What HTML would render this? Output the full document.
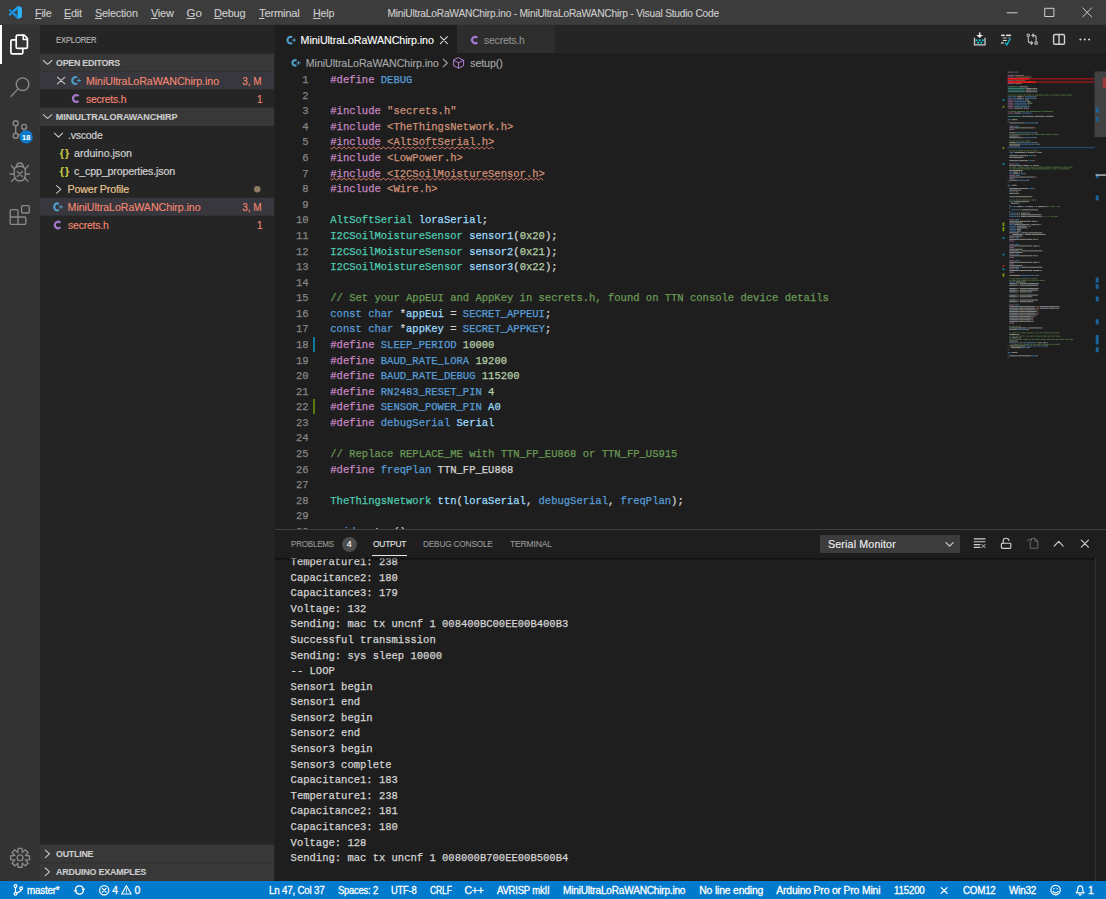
<!DOCTYPE html>
<html>
<head>
<meta charset="utf-8">
<title>MiniUltraLoRaWANChirp.ino - MiniUltraLoRaWANChirp - Visual Studio Code</title>
<style>
*{box-sizing:border-box;margin:0;padding:0}
html,body{width:1106px;height:899px;overflow:hidden;background:#1e1e1e}
body{font-family:"Liberation Sans",sans-serif;font-size:10.66px;color:#ccc;position:relative}
.abs{position:absolute}
#titlebar{left:0;top:0;width:1106px;height:25px;background:#3c3c3c;border-bottom:1px solid #373737}
#activity{left:0;top:25px;width:40px;height:856px;background:#333}
#sidebar{left:40px;top:25px;width:234px;height:856px;background:#252526}
#editor{left:275px;top:25px;width:831px;height:505px;background:#1e1e1e;overflow:hidden}
#tabs{left:275px;top:25px;width:831px;height:28px;background:#252526}
#panel{left:275px;top:529px;width:831px;height:352px;background:#1e1e1e;border-top:1px solid #414141}
#outarea{left:0;top:28px;width:831px;height:323px;overflow:hidden}
#status{left:0;top:881px;width:1106px;height:18px;background:#007acc}
.bg{position:absolute;left:0;width:234px}
.t{position:absolute;white-space:pre;transform-origin:0 50%;-webkit-text-stroke:0.12px}
.t u{text-decoration-thickness:1px;text-underline-offset:1px}
.code{position:absolute;left:0;width:760px;height:15.58px;line-height:15.58px;font-family:"Liberation Mono",monospace;font-size:10.53px;white-space:pre;color:#d4d4d4;-webkit-text-stroke:0.25px}
.ln{position:absolute;top:1.8px;left:0;width:33.6px;text-align:right;color:#858585}
.cx{position:absolute;left:55.3px;top:1.8px}
.k{color:#c586c0}.b{color:#569cd6}.s{color:#ce9178}.ty{color:#4ec9b0}.v{color:#9cdcfe}.n{color:#b5cea8}.c{color:#6a9955}
.sq{text-decoration:underline wavy #f14c4c;text-decoration-thickness:0.8px;text-underline-offset:1.5px;text-decoration-skip-ink:none}
.out{position:absolute;left:15.6px;height:15.58px;line-height:15.58px;font-family:"Liberation Mono",monospace;font-size:10.53px;white-space:pre;color:#d4d4d4;-webkit-text-stroke:0.25px}
svg{position:absolute;overflow:visible}
</style>
</head>
<body>
<div id="titlebar" class="abs"></div>
<div id="activity" class="abs"></div>
<div id="sidebar" class="abs">
<svg width="236" height="856" viewBox="40 25 236 856" style="left:0;top:0">
<rect x="274" y="25" width="0.35" height="856" fill="#252526"/>
<rect x="40" y="53.6" width="234.35" height="17.8" fill="#383838"/>
<rect x="40" y="71.4" width="234.35" height="18.2" fill="#37373d"/>
<rect x="40" y="107.7" width="234.35" height="18.3" fill="#383838"/>
<rect x="40" y="197.8" width="234.35" height="17.9" fill="#37373d"/>
<rect x="40" y="844.7" width="234.35" height="36.3" fill="#383838"/>
<rect x="40" y="862.6" width="234.35" height="0.8" fill="#2c2c2d"/>
</svg>
</div>
<div id="editor" class="abs">
<div class="code" style="top:46.34px"><span class="ln">1</span><span class="cx"><span class="k">#define</span> <span class="b">DEBUG</span></span></div>
<div class="code" style="top:61.92px"><span class="ln">2</span><span class="cx"></span></div>
<div class="code" style="top:77.50px"><span class="ln">3</span><span class="cx"><span class="k">#include</span> <span class="s">&quot;secrets.h&quot;</span></span></div>
<div class="code" style="top:93.08px"><span class="ln">4</span><span class="cx"><span class="k">#include</span> <span class="s">&lt;TheThingsNetwork.h&gt;</span></span></div>
<div class="code" style="top:108.66px"><span class="ln">5</span><span class="cx"><span class="k">#include</span> <span class="s">&lt;AltSoftSerial.h&gt;</span></span></div>
<div class="code" style="top:124.24px"><span class="ln">6</span><span class="cx"><span class="k">#include</span> <span class="s">&lt;LowPower.h&gt;</span></span></div>
<div class="code" style="top:139.82px"><span class="ln">7</span><span class="cx"><span class="k">#include</span> <span class="s">&lt;I2CSoilMoistureSensor.h&gt;</span></span></div>
<div class="code" style="top:155.40px"><span class="ln">8</span><span class="cx"><span class="k">#include</span> <span class="s">&lt;Wire.h&gt;</span></span></div>
<div class="code" style="top:170.98px"><span class="ln">9</span><span class="cx"></span></div>
<div class="code" style="top:186.56px"><span class="ln">10</span><span class="cx"><span class="ty">AltSoftSerial</span> <span class="v">loraSerial</span>;</span></div>
<div class="code" style="top:202.14px"><span class="ln">11</span><span class="cx"><span class="ty">I2CSoilMoistureSensor</span> <span class="v">sensor1</span>(<span class="n">0x20</span>);</span></div>
<div class="code" style="top:217.72px"><span class="ln">12</span><span class="cx"><span class="ty">I2CSoilMoistureSensor</span> <span class="v">sensor2</span>(<span class="n">0x21</span>);</span></div>
<div class="code" style="top:233.30px"><span class="ln">13</span><span class="cx"><span class="ty">I2CSoilMoistureSensor</span> <span class="v">sensor3</span>(<span class="n">0x22</span>);</span></div>
<div class="code" style="top:248.88px"><span class="ln">14</span><span class="cx"></span></div>
<div class="code" style="top:264.46px"><span class="ln">15</span><span class="cx"><span class="c">// Set your AppEUI and AppKey in secrets.h, found on TTN console device details</span></span></div>
<div class="code" style="top:280.04px"><span class="ln">16</span><span class="cx"><span class="b">const</span> <span class="b">char</span> *<span class="v">appEui</span> = <span class="b">SECRET_APPEUI</span>;</span></div>
<div class="code" style="top:295.62px"><span class="ln">17</span><span class="cx"><span class="b">const</span> <span class="b">char</span> *<span class="v">appKey</span> = <span class="b">SECRET_APPKEY</span>;</span></div>
<div class="code" style="top:311.20px"><span class="ln">18</span><span class="cx"><span class="k">#define</span> <span class="b">SLEEP_PERIOD</span> <span class="n">10000</span></span></div>
<div class="code" style="top:326.78px"><span class="ln">19</span><span class="cx"><span class="k">#define</span> <span class="b">BAUD_RATE_LORA</span> <span class="n">19200</span></span></div>
<div class="code" style="top:342.36px"><span class="ln">20</span><span class="cx"><span class="k">#define</span> <span class="b">BAUD_RATE_DEBUG</span> <span class="n">115200</span></span></div>
<div class="code" style="top:357.94px"><span class="ln">21</span><span class="cx"><span class="k">#define</span> <span class="b">RN2483_RESET_PIN</span> <span class="n">4</span></span></div>
<div class="code" style="top:373.52px"><span class="ln">22</span><span class="cx"><span class="k">#define</span> <span class="b">SENSOR_POWER_PIN</span> <span class="v">A0</span></span></div>
<div class="code" style="top:389.10px"><span class="ln">23</span><span class="cx"><span class="k">#define</span> <span class="b">debugSerial</span> <span class="v">Serial</span></span></div>
<div class="code" style="top:404.68px"><span class="ln">24</span><span class="cx"></span></div>
<div class="code" style="top:420.26px"><span class="ln">25</span><span class="cx"><span class="c">// Replace REPLACE_ME with TTN_FP_EU868 or TTN_FP_US915</span></span></div>
<div class="code" style="top:435.84px"><span class="ln">26</span><span class="cx"><span class="k">#define</span> <span class="b">freqPlan</span> TTN_FP_EU868</span></div>
<div class="code" style="top:451.42px"><span class="ln">27</span><span class="cx"></span></div>
<div class="code" style="top:467.00px"><span class="ln">28</span><span class="cx"><span class="ty">TheThingsNetwork</span> <span class="v">ttn</span>(<span class="v">loraSerial</span>, <span class="b">debugSerial</span>, <span class="b">freqPlan</span>);</span></div>
<div class="code" style="top:482.58px"><span class="ln">29</span><span class="cx"></span></div>
<div class="code" style="top:498.16px"><span class="ln">30</span><span class="cx"><span class="b">void</span> setup()</span></div>
<svg width="831" height="505" viewBox="0 0 831 505" style="left:0;top:0"><path d="M55.30 122.85 L56.69 123.99 L59.15 122.03 L60.22 122.85 L61.61 123.99 L64.07 122.03 L65.14 122.85 L66.53 123.99 L68.99 122.03 L70.06 122.85 L71.45 123.99 L73.91 122.03 L74.98 122.85 L76.37 123.99 L78.83 122.03 L79.90 122.85 L81.29 123.99 L83.75 122.03 L84.82 122.85 L86.21 123.99 L88.67 122.03 L89.74 122.85 L91.13 123.99 L93.59 122.03 L94.66 122.85 L96.05 123.99 L98.51 122.03 L99.58 122.85 L100.97 123.99 L103.43 122.03 L104.50 122.85 L105.89 123.99 L108.35 122.03 L109.42 122.85 L110.81 123.99 L113.27 122.03 L114.34 122.85 L115.73 123.99 L118.19 122.03 L119.26 122.85 L120.65 123.99 L123.11 122.03 L124.18 122.85 L125.57 123.99 L128.03 122.03 L129.10 122.85 L130.49 123.99 L132.95 122.03 L134.02 122.85 L135.41 123.99 L137.87 122.03 L138.94 122.85 L140.33 123.99 L142.79 122.03 L143.86 122.85 L145.25 123.99 L147.71 122.03 L148.78 122.85 L150.17 123.99 L152.63 122.03 L153.70 122.85 L155.09 123.99 L157.55 122.03 L158.62 122.85 L160.01 123.99 L162.47 122.03 L163.54 122.85 L164.93 123.99 L167.39 122.03 L168.46 122.85 L169.85 123.99 L172.31 122.03 L173.38 122.85 L174.77 123.99 L177.23 122.03 L178.30 122.85 L179.69 123.99 L182.15 122.03 L183.22 122.85 L184.61 123.99 L187.07 122.03 L188.14 122.85 L189.53 123.99 L191.99 122.03 L193.06 122.85 L194.45 123.99 L196.91 122.03 L197.98 122.85 L199.37 123.99 L201.83 122.03 L202.90 122.85 L204.29 123.99 L206.75 122.03 L207.82 122.85 L209.21 123.99 L211.67 122.03 L212.74 122.85 L214.13 123.99 L216.59 122.03 L217.66 122.85 L219.05 123.99" fill="none" stroke="#f48771" stroke-width="0.85" stroke-linejoin="miter"/></svg>
<svg width="831" height="505" viewBox="0 0 831 505" style="left:0;top:0"><path d="M55.30 154.01 L56.69 155.15 L59.15 153.19 L60.22 154.01 L61.61 155.15 L64.07 153.19 L65.14 154.01 L66.53 155.15 L68.99 153.19 L70.06 154.01 L71.45 155.15 L73.91 153.19 L74.98 154.01 L76.37 155.15 L78.83 153.19 L79.90 154.01 L81.29 155.15 L83.75 153.19 L84.82 154.01 L86.21 155.15 L88.67 153.19 L89.74 154.01 L91.13 155.15 L93.59 153.19 L94.66 154.01 L96.05 155.15 L98.51 153.19 L99.58 154.01 L100.97 155.15 L103.43 153.19 L104.50 154.01 L105.89 155.15 L108.35 153.19 L109.42 154.01 L110.81 155.15 L113.27 153.19 L114.34 154.01 L115.73 155.15 L118.19 153.19 L119.26 154.01 L120.65 155.15 L123.11 153.19 L124.18 154.01 L125.57 155.15 L128.03 153.19 L129.10 154.01 L130.49 155.15 L132.95 153.19 L134.02 154.01 L135.41 155.15 L137.87 153.19 L138.94 154.01 L140.33 155.15 L142.79 153.19 L143.86 154.01 L145.25 155.15 L147.71 153.19 L148.78 154.01 L150.17 155.15 L152.63 153.19 L153.70 154.01 L155.09 155.15 L157.55 153.19 L158.62 154.01 L160.01 155.15 L162.47 153.19 L163.54 154.01 L164.93 155.15 L167.39 153.19 L168.46 154.01 L169.85 155.15 L172.31 153.19 L173.38 154.01 L174.77 155.15 L177.23 153.19 L178.30 154.01 L179.69 155.15 L182.15 153.19 L183.22 154.01 L184.61 155.15 L187.07 153.19 L188.14 154.01 L189.53 155.15 L191.99 153.19 L193.06 154.01 L194.45 155.15 L196.91 153.19 L197.98 154.01 L199.37 155.15 L201.83 153.19 L202.90 154.01 L204.29 155.15 L206.75 153.19 L207.82 154.01 L209.21 155.15 L211.67 153.19 L212.74 154.01 L214.13 155.15 L216.59 153.19 L217.66 154.01 L219.05 155.15 L221.51 153.19 L222.58 154.01 L223.97 155.15 L226.43 153.19 L227.50 154.01 L228.89 155.15 L231.35 153.19 L232.42 154.01 L233.81 155.15 L236.27 153.19 L237.34 154.01 L238.73 155.15 L241.19 153.19 L242.26 154.01 L243.65 155.15 L246.11 153.19 L247.18 154.01 L248.57 155.15 L251.03 153.19 L252.10 154.01 L253.49 155.15 L255.95 153.19 L257.02 154.01 L258.41 155.15 L260.87 153.19 L261.94 154.01 L263.33 155.15 L265.79 153.19 L266.86 154.01 L268.25 155.15" fill="none" stroke="#f48771" stroke-width="0.85" stroke-linejoin="miter"/></svg>
<div class="abs" style="left:37.9px;top:311.6px;width:2.5px;height:15.6px;background:#0c7d9d"></div>
<div class="abs" style="left:37.9px;top:373.9px;width:2.5px;height:15.6px;background:#587c0c"></div>
<svg width="831" height="505" viewBox="0 0 831 505" style="left:0;top:0" shape-rendering="auto"><g opacity="0.56"><rect x="732.7" y="46.59" width="5.7" height="1.0" fill="#c586c0"/><rect x="739.3" y="46.59" width="4.1" height="1.0" fill="#569cd6"/><rect x="732.7" y="49.87" width="6.6" height="1.0" fill="#c586c0"/><rect x="740.1" y="49.87" width="9.0" height="1.0" fill="#ce9178"/><rect x="732.7" y="51.51" width="6.6" height="1.0" fill="#c586c0"/><rect x="740.1" y="51.51" width="16.4" height="1.0" fill="#ce9178"/><rect x="732.7" y="54.79" width="6.6" height="1.0" fill="#c586c0"/><rect x="740.1" y="54.79" width="9.8" height="1.0" fill="#ce9178"/><rect x="732.7" y="58.07" width="6.6" height="1.0" fill="#c586c0"/><rect x="740.1" y="58.07" width="6.6" height="1.0" fill="#ce9178"/><rect x="732.7" y="61.35" width="10.7" height="1.0" fill="#4ec9b0"/><rect x="744.2" y="61.35" width="8.2" height="1.0" fill="#cdd9e2"/><rect x="752.4" y="61.35" width="0.8" height="1.0" fill="#d4d4d4"/><rect x="732.7" y="62.99" width="17.2" height="1.0" fill="#4ec9b0"/><rect x="750.7" y="62.99" width="5.7" height="1.0" fill="#d6d6c8"/><rect x="756.5" y="62.99" width="0.8" height="1.0" fill="#d4d4d4"/><rect x="757.3" y="62.99" width="3.3" height="1.0" fill="#b5cea8"/><rect x="760.6" y="62.99" width="1.6" height="1.0" fill="#d4d4d4"/><rect x="732.7" y="64.63" width="17.2" height="1.0" fill="#4ec9b0"/><rect x="750.7" y="64.63" width="5.7" height="1.0" fill="#d6d6c8"/><rect x="756.5" y="64.63" width="0.8" height="1.0" fill="#d4d4d4"/><rect x="757.3" y="64.63" width="3.3" height="1.0" fill="#b5cea8"/><rect x="760.6" y="64.63" width="1.6" height="1.0" fill="#d4d4d4"/><rect x="732.7" y="66.27" width="17.2" height="1.0" fill="#4ec9b0"/><rect x="750.7" y="66.27" width="5.7" height="1.0" fill="#d6d6c8"/><rect x="756.5" y="66.27" width="0.8" height="1.0" fill="#d4d4d4"/><rect x="757.3" y="66.27" width="3.3" height="1.0" fill="#b5cea8"/><rect x="760.6" y="66.27" width="1.6" height="1.0" fill="#d4d4d4"/><rect x="732.7" y="69.55" width="1.6" height="1.0" fill="#6a9955"/><rect x="735.2" y="69.55" width="2.5" height="1.0" fill="#6a9955"/><rect x="738.4" y="69.55" width="3.3" height="1.0" fill="#6a9955"/><rect x="742.5" y="69.55" width="4.9" height="1.0" fill="#6a9955"/><rect x="748.3" y="69.55" width="2.5" height="1.0" fill="#6a9955"/><rect x="751.6" y="69.55" width="4.9" height="1.0" fill="#6a9955"/><rect x="757.3" y="69.55" width="1.6" height="1.0" fill="#6a9955"/><rect x="759.8" y="69.55" width="8.2" height="1.0" fill="#6a9955"/><rect x="768.8" y="69.55" width="4.1" height="1.0" fill="#6a9955"/><rect x="773.7" y="69.55" width="1.6" height="1.0" fill="#6a9955"/><rect x="776.2" y="69.55" width="2.5" height="1.0" fill="#6a9955"/><rect x="779.4" y="69.55" width="5.7" height="1.0" fill="#6a9955"/><rect x="786.0" y="69.55" width="4.9" height="1.0" fill="#6a9955"/><rect x="791.7" y="69.55" width="5.7" height="1.0" fill="#6a9955"/><rect x="732.7" y="71.19" width="4.1" height="1.0" fill="#569cd6"/><rect x="737.6" y="71.19" width="3.3" height="1.0" fill="#569cd6"/><rect x="741.7" y="71.19" width="0.8" height="1.0" fill="#d4d4d4"/><rect x="742.5" y="71.19" width="4.9" height="1.0" fill="#cdd9e2"/><rect x="748.3" y="71.19" width="0.8" height="1.0" fill="#d4d4d4"/><rect x="749.9" y="71.19" width="10.7" height="1.0" fill="#569cd6"/><rect x="760.6" y="71.19" width="0.8" height="1.0" fill="#d4d4d4"/><rect x="732.7" y="72.83" width="4.1" height="1.0" fill="#569cd6"/><rect x="737.6" y="72.83" width="3.3" height="1.0" fill="#569cd6"/><rect x="741.7" y="72.83" width="0.8" height="1.0" fill="#d4d4d4"/><rect x="742.5" y="72.83" width="4.9" height="1.0" fill="#cdd9e2"/><rect x="748.3" y="72.83" width="0.8" height="1.0" fill="#d4d4d4"/><rect x="749.9" y="72.83" width="10.7" height="1.0" fill="#569cd6"/><rect x="760.6" y="72.83" width="0.8" height="1.0" fill="#d4d4d4"/><rect x="732.7" y="74.47" width="5.7" height="1.0" fill="#c586c0"/><rect x="739.3" y="74.47" width="9.8" height="1.0" fill="#569cd6"/><rect x="749.9" y="74.47" width="4.1" height="1.0" fill="#b5cea8"/><rect x="732.7" y="76.11" width="5.7" height="1.0" fill="#c586c0"/><rect x="739.3" y="76.11" width="11.5" height="1.0" fill="#569cd6"/><rect x="751.6" y="76.11" width="4.1" height="1.0" fill="#b5cea8"/><rect x="732.7" y="77.75" width="5.7" height="1.0" fill="#c586c0"/><rect x="739.3" y="77.75" width="12.3" height="1.0" fill="#569cd6"/><rect x="752.4" y="77.75" width="4.9" height="1.0" fill="#b5cea8"/><rect x="732.7" y="79.39" width="5.7" height="1.0" fill="#c586c0"/><rect x="739.3" y="79.39" width="13.1" height="1.0" fill="#569cd6"/><rect x="753.2" y="79.39" width="0.8" height="1.0" fill="#b5cea8"/><rect x="732.7" y="81.03" width="5.7" height="1.0" fill="#c586c0"/><rect x="739.3" y="81.03" width="13.1" height="1.0" fill="#569cd6"/><rect x="753.2" y="81.03" width="1.6" height="1.0" fill="#569cd6"/><rect x="732.7" y="82.67" width="5.7" height="1.0" fill="#c586c0"/><rect x="739.3" y="82.67" width="9.0" height="1.0" fill="#cdd9e2"/><rect x="749.1" y="82.67" width="4.9" height="1.0" fill="#d4d4d4"/><rect x="732.7" y="85.95" width="1.6" height="1.0" fill="#6a9955"/><rect x="735.2" y="85.95" width="5.7" height="1.0" fill="#6a9955"/><rect x="741.7" y="85.95" width="8.2" height="1.0" fill="#6a9955"/><rect x="750.7" y="85.95" width="3.3" height="1.0" fill="#6a9955"/><rect x="754.8" y="85.95" width="9.8" height="1.0" fill="#6a9955"/><rect x="765.5" y="85.95" width="1.6" height="1.0" fill="#6a9955"/><rect x="768.0" y="85.95" width="9.8" height="1.0" fill="#6a9955"/><rect x="732.7" y="87.59" width="5.7" height="1.0" fill="#c586c0"/><rect x="739.3" y="87.59" width="6.6" height="1.0" fill="#cdd9e2"/><rect x="746.6" y="87.59" width="9.8" height="1.0" fill="#569cd6"/><rect x="732.7" y="90.87" width="13.1" height="1.0" fill="#4ec9b0"/><rect x="746.6" y="90.87" width="2.5" height="1.0" fill="#d6d6c8"/><rect x="749.1" y="90.87" width="0.8" height="1.0" fill="#d4d4d4"/><rect x="749.9" y="90.87" width="8.2" height="1.0" fill="#cdd9e2"/><rect x="758.1" y="90.87" width="0.8" height="1.0" fill="#d4d4d4"/><rect x="759.8" y="90.87" width="9.0" height="1.0" fill="#cdd9e2"/><rect x="768.8" y="90.87" width="0.8" height="1.0" fill="#d4d4d4"/><rect x="770.4" y="90.87" width="6.6" height="1.0" fill="#cdd9e2"/><rect x="777.0" y="90.87" width="1.6" height="1.0" fill="#d4d4d4"/><rect x="732.7" y="94.15" width="3.3" height="1.0" fill="#569cd6"/><rect x="736.8" y="94.15" width="4.1" height="1.0" fill="#d6d6c8"/><rect x="740.9" y="94.15" width="1.6" height="1.0" fill="#d4d4d4"/><rect x="732.7" y="95.79" width="0.8" height="1.0" fill="#d4d4d4"/><rect x="734.3" y="97.43" width="9.0" height="1.0" fill="#cdd9e2"/><rect x="743.4" y="97.43" width="0.8" height="1.0" fill="#d4d4d4"/><rect x="744.2" y="97.43" width="4.1" height="1.0" fill="#d6d6c8"/><rect x="748.3" y="97.43" width="0.8" height="1.0" fill="#d4d4d4"/><rect x="749.1" y="97.43" width="12.3" height="1.0" fill="#569cd6"/><rect x="761.4" y="97.43" width="1.6" height="1.0" fill="#d4d4d4"/><rect x="734.3" y="100.71" width="4.9" height="1.0" fill="#c586c0"/><rect x="740.1" y="100.71" width="4.1" height="1.0" fill="#569cd6"/><rect x="734.3" y="102.35" width="9.0" height="1.0" fill="#cdd9e2"/><rect x="743.4" y="102.35" width="0.8" height="1.0" fill="#d4d4d4"/><rect x="744.2" y="102.35" width="5.7" height="1.0" fill="#d6d6c8"/><rect x="749.9" y="102.35" width="1.6" height="1.0" fill="#d4d4d4"/><rect x="751.6" y="102.35" width="6.6" height="1.0" fill="#d4d4d4"/><rect x="758.1" y="102.35" width="2.5" height="1.0" fill="#ce9178"/><rect x="734.3" y="103.99" width="4.9" height="1.0" fill="#c586c0"/><rect x="734.3" y="107.27" width="5.7" height="1.0" fill="#d6d6c8"/><rect x="740.1" y="107.27" width="0.8" height="1.0" fill="#d4d4d4"/><rect x="740.9" y="107.27" width="13.1" height="1.0" fill="#569cd6"/><rect x="754.0" y="107.27" width="0.8" height="1.0" fill="#d4d4d4"/><rect x="755.7" y="107.27" width="4.9" height="1.0" fill="#569cd6"/><rect x="760.6" y="107.27" width="1.6" height="1.0" fill="#d4d4d4"/><rect x="734.3" y="108.91" width="1.6" height="1.0" fill="#6a9955"/><rect x="736.8" y="108.91" width="19.7" height="1.0" fill="#6a9955"/><rect x="757.3" y="108.91" width="1.6" height="1.0" fill="#6a9955"/><rect x="759.8" y="108.91" width="4.9" height="1.0" fill="#6a9955"/><rect x="765.5" y="108.91" width="4.1" height="1.0" fill="#6a9955"/><rect x="770.4" y="108.91" width="4.1" height="1.0" fill="#6a9955"/><rect x="775.3" y="108.91" width="1.6" height="1.0" fill="#6a9955"/><rect x="777.8" y="108.91" width="5.7" height="1.0" fill="#6a9955"/><rect x="734.3" y="110.55" width="7.4" height="1.0" fill="#d6d6c8"/><rect x="741.7" y="110.55" width="2.5" height="1.0" fill="#d4d4d4"/><rect x="734.3" y="112.19" width="8.2" height="1.0" fill="#cdd9e2"/><rect x="742.5" y="112.19" width="0.8" height="1.0" fill="#d4d4d4"/><rect x="743.4" y="112.19" width="4.1" height="1.0" fill="#d6d6c8"/><rect x="747.5" y="112.19" width="0.8" height="1.0" fill="#d4d4d4"/><rect x="748.3" y="112.19" width="11.5" height="1.0" fill="#569cd6"/><rect x="759.8" y="112.19" width="1.6" height="1.0" fill="#d4d4d4"/><rect x="734.3" y="115.47" width="1.6" height="1.0" fill="#6a9955"/><rect x="736.8" y="115.47" width="3.3" height="1.0" fill="#6a9955"/><rect x="740.9" y="115.47" width="1.6" height="1.0" fill="#6a9955"/><rect x="743.4" y="115.47" width="2.5" height="1.0" fill="#6a9955"/><rect x="746.6" y="115.47" width="2.5" height="1.0" fill="#6a9955"/><rect x="749.9" y="115.47" width="5.7" height="1.0" fill="#6a9955"/><rect x="734.3" y="117.11" width="5.7" height="1.0" fill="#d6d6c8"/><rect x="740.1" y="117.11" width="0.8" height="1.0" fill="#d4d4d4"/><rect x="740.9" y="117.11" width="13.1" height="1.0" fill="#569cd6"/><rect x="754.0" y="117.11" width="0.8" height="1.0" fill="#d4d4d4"/><rect x="755.7" y="117.11" width="4.9" height="1.0" fill="#569cd6"/><rect x="760.6" y="117.11" width="1.6" height="1.0" fill="#d4d4d4"/><rect x="734.3" y="118.75" width="9.8" height="1.0" fill="#d6d6c8"/><rect x="744.2" y="118.75" width="0.8" height="1.0" fill="#d4d4d4"/><rect x="745.0" y="118.75" width="13.1" height="1.0" fill="#569cd6"/><rect x="758.1" y="118.75" width="0.8" height="1.0" fill="#d4d4d4"/><rect x="759.8" y="118.75" width="3.3" height="1.0" fill="#569cd6"/><rect x="763.0" y="118.75" width="1.6" height="1.0" fill="#d4d4d4"/><rect x="734.3" y="120.39" width="3.3" height="1.0" fill="#d4d4d4"/><rect x="737.6" y="120.39" width="0.8" height="1.0" fill="#d4d4d4"/><rect x="738.4" y="120.39" width="4.1" height="1.0" fill="#d6d6c8"/><rect x="742.5" y="120.39" width="2.5" height="1.0" fill="#d4d4d4"/><rect x="734.3" y="122.03" width="5.7" height="1.0" fill="#cdd9e2"/><rect x="740.1" y="122.03" width="0.8" height="1.0" fill="#d4d4d4"/><rect x="740.9" y="122.03" width="4.1" height="1.0" fill="#d6d6c8"/><rect x="745.0" y="122.03" width="2.5" height="1.0" fill="#d4d4d4"/><rect x="748.3" y="122.03" width="5.7" height="1.0" fill="#cdd9e2"/><rect x="754.0" y="122.03" width="0.8" height="1.0" fill="#d4d4d4"/><rect x="754.8" y="122.03" width="4.1" height="1.0" fill="#d6d6c8"/><rect x="758.9" y="122.03" width="2.5" height="1.0" fill="#d4d4d4"/><rect x="734.3" y="125.31" width="1.6" height="1.0" fill="#6a9955"/><rect x="736.8" y="125.31" width="3.3" height="1.0" fill="#6a9955"/><rect x="740.9" y="125.31" width="0.8" height="1.0" fill="#6a9955"/><rect x="742.5" y="125.31" width="5.7" height="1.0" fill="#6a9955"/><rect x="749.1" y="125.31" width="1.6" height="1.0" fill="#6a9955"/><rect x="751.6" y="125.31" width="2.5" height="1.0" fill="#6a9955"/><rect x="754.8" y="125.31" width="2.5" height="1.0" fill="#6a9955"/><rect x="758.1" y="125.31" width="4.9" height="1.0" fill="#6a9955"/><rect x="734.3" y="126.95" width="4.1" height="1.0" fill="#569cd6"/><rect x="739.3" y="126.95" width="1.6" height="1.0" fill="#d4d4d4"/><rect x="740.9" y="126.95" width="9.0" height="1.0" fill="#cdd9e2"/><rect x="750.7" y="126.95" width="1.6" height="1.0" fill="#d4d4d4"/><rect x="753.2" y="126.95" width="4.9" height="1.0" fill="#d6d6c8"/><rect x="758.1" y="126.95" width="1.6" height="1.0" fill="#d4d4d4"/><rect x="760.6" y="126.95" width="0.8" height="1.0" fill="#d4d4d4"/><rect x="762.2" y="126.95" width="4.1" height="1.0" fill="#b5cea8"/><rect x="766.3" y="126.95" width="0.8" height="1.0" fill="#d4d4d4"/><rect x="736.0" y="128.59" width="0.8" height="1.0" fill="#d4d4d4"/><rect x="734.3" y="130.23" width="9.0" height="1.0" fill="#cdd9e2"/><rect x="743.4" y="130.23" width="0.8" height="1.0" fill="#d4d4d4"/><rect x="744.2" y="130.23" width="5.7" height="1.0" fill="#d6d6c8"/><rect x="749.9" y="130.23" width="3.3" height="1.0" fill="#d4d4d4"/><rect x="754.0" y="130.23" width="4.9" height="1.0" fill="#569cd6"/><rect x="758.9" y="130.23" width="2.5" height="1.0" fill="#ce9178"/><rect x="734.3" y="131.87" width="2.5" height="1.0" fill="#cdd9e2"/><rect x="736.8" y="131.87" width="0.8" height="1.0" fill="#d4d4d4"/><rect x="737.6" y="131.87" width="8.2" height="1.0" fill="#d6d6c8"/><rect x="745.8" y="131.87" width="2.5" height="1.0" fill="#d4d4d4"/><rect x="734.3" y="135.15" width="9.0" height="1.0" fill="#cdd9e2"/><rect x="743.4" y="135.15" width="0.8" height="1.0" fill="#d4d4d4"/><rect x="744.2" y="135.15" width="5.7" height="1.0" fill="#d6d6c8"/><rect x="749.9" y="135.15" width="3.3" height="1.0" fill="#d4d4d4"/><rect x="754.0" y="135.15" width="3.3" height="1.0" fill="#569cd6"/><rect x="757.3" y="135.15" width="2.5" height="1.0" fill="#ce9178"/><rect x="734.3" y="138.43" width="4.9" height="1.0" fill="#c586c0"/><rect x="740.1" y="138.43" width="4.1" height="1.0" fill="#569cd6"/><rect x="734.3" y="140.07" width="2.5" height="1.0" fill="#cdd9e2"/><rect x="736.8" y="140.07" width="0.8" height="1.0" fill="#d4d4d4"/><rect x="737.6" y="140.07" width="3.3" height="1.0" fill="#d6d6c8"/><rect x="740.9" y="140.07" width="0.8" height="1.0" fill="#d4d4d4"/><rect x="741.7" y="140.07" width="4.9" height="1.0" fill="#cdd9e2"/><rect x="746.6" y="140.07" width="0.8" height="1.0" fill="#d4d4d4"/><rect x="748.3" y="140.07" width="4.9" height="1.0" fill="#cdd9e2"/><rect x="753.2" y="140.07" width="0.8" height="1.0" fill="#d4d4d4"/><rect x="754.8" y="140.07" width="0.8" height="1.0" fill="#d4d4d4"/><rect x="755.7" y="140.07" width="0.8" height="1.0" fill="#b5cea8"/><rect x="756.5" y="140.07" width="0.8" height="1.0" fill="#d4d4d4"/><rect x="758.1" y="140.07" width="4.1" height="1.0" fill="#b5cea8"/><rect x="762.2" y="140.07" width="1.6" height="1.0" fill="#d4d4d4"/><rect x="734.3" y="141.71" width="1.6" height="1.0" fill="#6a9955"/><rect x="736.8" y="141.71" width="4.1" height="1.0" fill="#6a9955"/><rect x="741.7" y="141.71" width="0.8" height="1.0" fill="#6a9955"/><rect x="743.4" y="141.71" width="5.7" height="1.0" fill="#6a9955"/><rect x="749.9" y="141.71" width="4.9" height="1.0" fill="#6a9955"/><rect x="755.7" y="141.71" width="4.1" height="1.0" fill="#6a9955"/><rect x="760.6" y="141.71" width="1.6" height="1.0" fill="#6a9955"/><rect x="763.0" y="141.71" width="6.6" height="1.0" fill="#6a9955"/><rect x="770.4" y="141.71" width="6.6" height="1.0" fill="#6a9955"/><rect x="777.8" y="141.71" width="6.6" height="1.0" fill="#6a9955"/><rect x="785.2" y="141.71" width="2.5" height="1.0" fill="#6a9955"/><rect x="788.5" y="141.71" width="3.3" height="1.0" fill="#6a9955"/><rect x="792.6" y="141.71" width="4.9" height="1.0" fill="#6a9955"/><rect x="734.3" y="143.35" width="1.6" height="1.0" fill="#6a9955"/><rect x="736.8" y="143.35" width="18.9" height="1.0" fill="#6a9955"/><rect x="756.5" y="143.35" width="18.0" height="1.0" fill="#6a9955"/><rect x="775.3" y="143.35" width="1.6" height="1.0" fill="#6a9955"/><rect x="777.8" y="143.35" width="3.3" height="1.0" fill="#6a9955"/><rect x="781.9" y="143.35" width="1.6" height="1.0" fill="#6a9955"/><rect x="784.4" y="143.35" width="2.5" height="1.0" fill="#6a9955"/><rect x="787.6" y="143.35" width="7.4" height="1.0" fill="#6a9955"/><rect x="734.3" y="144.99" width="2.5" height="1.0" fill="#cdd9e2"/><rect x="736.8" y="144.99" width="0.8" height="1.0" fill="#d4d4d4"/><rect x="737.6" y="144.99" width="7.4" height="1.0" fill="#d6d6c8"/><rect x="745.0" y="144.99" width="2.5" height="1.0" fill="#d4d4d4"/><rect x="734.3" y="146.63" width="2.5" height="1.0" fill="#569cd6"/><rect x="737.6" y="146.63" width="5.7" height="1.0" fill="#cdd9e2"/><rect x="744.2" y="146.63" width="0.8" height="1.0" fill="#d4d4d4"/><rect x="745.8" y="146.63" width="0.8" height="1.0" fill="#b5cea8"/><rect x="746.6" y="146.63" width="0.8" height="1.0" fill="#d4d4d4"/><rect x="734.3" y="148.27" width="3.3" height="1.0" fill="#569cd6"/><rect x="738.4" y="148.27" width="4.9" height="1.0" fill="#cdd9e2"/><rect x="744.2" y="148.27" width="0.8" height="1.0" fill="#d4d4d4"/><rect x="745.8" y="148.27" width="4.1" height="1.0" fill="#569cd6"/><rect x="749.9" y="148.27" width="0.8" height="1.0" fill="#d4d4d4"/><rect x="734.3" y="149.91" width="5.7" height="1.0" fill="#c586c0"/><rect x="740.9" y="149.91" width="4.1" height="1.0" fill="#569cd6"/><rect x="734.3" y="151.55" width="9.0" height="1.0" fill="#cdd9e2"/><rect x="743.4" y="151.55" width="0.8" height="1.0" fill="#d4d4d4"/><rect x="744.2" y="151.55" width="5.7" height="1.0" fill="#d6d6c8"/><rect x="749.9" y="151.55" width="0.8" height="1.0" fill="#d4d4d4"/><rect x="750.7" y="151.55" width="0.8" height="1.0" fill="#d4d4d4"/><rect x="751.6" y="151.55" width="1.6" height="1.0" fill="#d4d4d4"/><rect x="753.2" y="151.55" width="4.9" height="1.0" fill="#cdd9e2"/><rect x="758.1" y="151.55" width="3.3" height="1.0" fill="#ce9178"/><rect x="734.3" y="153.19" width="4.9" height="1.0" fill="#c586c0"/><rect x="734.3" y="154.83" width="2.5" height="1.0" fill="#cdd9e2"/><rect x="736.8" y="154.83" width="0.8" height="1.0" fill="#d4d4d4"/><rect x="737.6" y="154.83" width="4.1" height="1.0" fill="#d6d6c8"/><rect x="741.7" y="154.83" width="0.8" height="1.0" fill="#d4d4d4"/><rect x="742.5" y="154.83" width="9.8" height="1.0" fill="#569cd6"/><rect x="752.4" y="154.83" width="1.6" height="1.0" fill="#d4d4d4"/><rect x="732.7" y="156.47" width="0.8" height="1.0" fill="#d4d4d4"/><rect x="732.7" y="159.75" width="3.3" height="1.0" fill="#569cd6"/><rect x="736.8" y="159.75" width="3.3" height="1.0" fill="#d6d6c8"/><rect x="740.1" y="159.75" width="1.6" height="1.0" fill="#d4d4d4"/><rect x="732.7" y="161.39" width="0.8" height="1.0" fill="#d4d4d4"/><rect x="734.3" y="163.03" width="9.0" height="1.0" fill="#cdd9e2"/><rect x="743.4" y="163.03" width="0.8" height="1.0" fill="#d4d4d4"/><rect x="744.2" y="163.03" width="5.7" height="1.0" fill="#d6d6c8"/><rect x="749.9" y="163.03" width="3.3" height="1.0" fill="#d4d4d4"/><rect x="754.0" y="163.03" width="3.3" height="1.0" fill="#569cd6"/><rect x="757.3" y="163.03" width="2.5" height="1.0" fill="#ce9178"/><rect x="734.3" y="164.67" width="9.0" height="1.0" fill="#d6d6c8"/><rect x="743.4" y="164.67" width="2.5" height="1.0" fill="#d4d4d4"/><rect x="734.3" y="166.31" width="2.5" height="1.0" fill="#569cd6"/><rect x="737.6" y="166.31" width="0.8" height="1.0" fill="#cdd9e2"/><rect x="739.3" y="166.31" width="0.8" height="1.0" fill="#d4d4d4"/><rect x="740.9" y="166.31" width="0.8" height="1.0" fill="#b5cea8"/><rect x="741.7" y="166.31" width="0.8" height="1.0" fill="#d4d4d4"/><rect x="734.3" y="167.95" width="4.1" height="1.0" fill="#d6d6c8"/><rect x="738.4" y="167.95" width="0.8" height="1.0" fill="#d4d4d4"/><rect x="739.3" y="167.95" width="3.3" height="1.0" fill="#b5cea8"/><rect x="742.5" y="167.95" width="1.6" height="1.0" fill="#d4d4d4"/><rect x="734.3" y="171.23" width="5.7" height="1.0" fill="#cdd9e2"/><rect x="740.1" y="171.23" width="0.8" height="1.0" fill="#d4d4d4"/><rect x="740.9" y="171.23" width="13.9" height="1.0" fill="#d6d6c8"/><rect x="754.8" y="171.23" width="2.5" height="1.0" fill="#d4d4d4"/><rect x="734.3" y="174.51" width="1.6" height="1.0" fill="#6a9955"/><rect x="736.8" y="174.51" width="3.3" height="1.0" fill="#6a9955"/><rect x="740.9" y="174.51" width="2.5" height="1.0" fill="#6a9955"/><rect x="744.2" y="174.51" width="2.5" height="1.0" fill="#6a9955"/><rect x="747.5" y="174.51" width="5.7" height="1.0" fill="#6a9955"/><rect x="754.0" y="174.51" width="1.6" height="1.0" fill="#6a9955"/><rect x="756.5" y="174.51" width="4.9" height="1.0" fill="#6a9955"/><rect x="734.3" y="176.15" width="4.1" height="1.0" fill="#569cd6"/><rect x="739.3" y="176.15" width="0.8" height="1.0" fill="#d4d4d4"/><rect x="740.1" y="176.15" width="5.7" height="1.0" fill="#cdd9e2"/><rect x="745.8" y="176.15" width="0.8" height="1.0" fill="#d4d4d4"/><rect x="746.6" y="176.15" width="4.9" height="1.0" fill="#d6d6c8"/><rect x="751.6" y="176.15" width="2.5" height="1.0" fill="#d4d4d4"/><rect x="736.0" y="177.79" width="4.1" height="1.0" fill="#d6d6c8"/><rect x="740.1" y="177.79" width="0.8" height="1.0" fill="#d4d4d4"/><rect x="740.9" y="177.79" width="1.6" height="1.0" fill="#b5cea8"/><rect x="742.5" y="177.79" width="1.6" height="1.0" fill="#d4d4d4"/><rect x="734.3" y="179.43" width="0.8" height="1.0" fill="#d4d4d4"/><rect x="773.7" y="181.07" width="1.6" height="1.0" fill="#6a9955"/><rect x="776.2" y="181.07" width="4.1" height="1.0" fill="#6a9955"/><rect x="781.1" y="181.07" width="0.8" height="1.0" fill="#6a9955"/><rect x="782.7" y="181.07" width="2.5" height="1.0" fill="#6a9955"/><rect x="734.3" y="181.07" width="2.5" height="1.0" fill="#569cd6"/><rect x="737.6" y="181.07" width="0.8" height="1.0" fill="#d4d4d4"/><rect x="738.4" y="181.07" width="2.5" height="1.0" fill="#569cd6"/><rect x="741.7" y="181.07" width="5.7" height="1.0" fill="#cdd9e2"/><rect x="748.3" y="181.07" width="0.8" height="1.0" fill="#d4d4d4"/><rect x="749.9" y="181.07" width="0.8" height="1.0" fill="#b5cea8"/><rect x="750.7" y="181.07" width="0.8" height="1.0" fill="#d4d4d4"/><rect x="752.4" y="181.07" width="5.7" height="1.0" fill="#cdd9e2"/><rect x="758.9" y="181.07" width="0.8" height="1.0" fill="#d4d4d4"/><rect x="760.6" y="181.07" width="0.8" height="1.0" fill="#b5cea8"/><rect x="761.4" y="181.07" width="0.8" height="1.0" fill="#d4d4d4"/><rect x="763.0" y="181.07" width="5.7" height="1.0" fill="#cdd9e2"/><rect x="768.8" y="181.07" width="2.5" height="1.0" fill="#d4d4d4"/><rect x="772.1" y="181.07" width="0.8" height="1.0" fill="#d4d4d4"/><rect x="734.3" y="182.71" width="0.8" height="1.0" fill="#d4d4d4"/><rect x="736.0" y="184.35" width="6.6" height="1.0" fill="#569cd6"/><rect x="743.4" y="184.35" width="0.8" height="1.0" fill="#cdd9e2"/><rect x="745.0" y="184.35" width="0.8" height="1.0" fill="#d4d4d4"/><rect x="746.6" y="184.35" width="8.2" height="1.0" fill="#d6d6c8"/><rect x="754.8" y="184.35" width="0.8" height="1.0" fill="#d4d4d4"/><rect x="755.7" y="184.35" width="5.7" height="1.0" fill="#cdd9e2"/><rect x="761.4" y="184.35" width="1.6" height="1.0" fill="#d4d4d4"/><rect x="734.3" y="185.99" width="0.8" height="1.0" fill="#d4d4d4"/><rect x="734.3" y="187.63" width="6.6" height="1.0" fill="#569cd6"/><rect x="741.7" y="187.63" width="1.6" height="1.0" fill="#cdd9e2"/><rect x="744.2" y="187.63" width="0.8" height="1.0" fill="#d4d4d4"/><rect x="745.8" y="187.63" width="5.7" height="1.0" fill="#d6d6c8"/><rect x="751.6" y="187.63" width="0.8" height="1.0" fill="#d4d4d4"/><rect x="752.4" y="187.63" width="0.8" height="1.0" fill="#b5cea8"/><rect x="753.2" y="187.63" width="1.6" height="1.0" fill="#d4d4d4"/><rect x="734.3" y="189.27" width="6.6" height="1.0" fill="#569cd6"/><rect x="741.7" y="189.27" width="1.6" height="1.0" fill="#cdd9e2"/><rect x="744.2" y="189.27" width="0.8" height="1.0" fill="#d4d4d4"/><rect x="745.8" y="189.27" width="5.7" height="1.0" fill="#cdd9e2"/><rect x="751.6" y="189.27" width="0.8" height="1.0" fill="#d4d4d4"/><rect x="752.4" y="189.27" width="11.5" height="1.0" fill="#d6d6c8"/><rect x="763.9" y="189.27" width="2.5" height="1.0" fill="#d4d4d4"/><rect x="767.1" y="190.91" width="1.6" height="1.0" fill="#6a9955"/><rect x="769.6" y="190.91" width="0.8" height="1.0" fill="#6a9955"/><rect x="771.2" y="190.91" width="0.8" height="1.0" fill="#6a9955"/><rect x="772.9" y="190.91" width="0.8" height="1.0" fill="#6a9955"/><rect x="774.5" y="190.91" width="0.8" height="1.0" fill="#6a9955"/><rect x="776.2" y="190.91" width="2.5" height="1.0" fill="#6a9955"/><rect x="779.4" y="190.91" width="3.3" height="1.0" fill="#6a9955"/><rect x="734.3" y="190.91" width="6.6" height="1.0" fill="#569cd6"/><rect x="741.7" y="190.91" width="1.6" height="1.0" fill="#cdd9e2"/><rect x="744.2" y="190.91" width="0.8" height="1.0" fill="#d4d4d4"/><rect x="745.8" y="190.91" width="5.7" height="1.0" fill="#cdd9e2"/><rect x="751.6" y="190.91" width="0.8" height="1.0" fill="#d4d4d4"/><rect x="752.4" y="190.91" width="11.5" height="1.0" fill="#d6d6c8"/><rect x="763.9" y="190.91" width="2.5" height="1.0" fill="#d4d4d4"/><rect x="734.3" y="194.19" width="4.9" height="1.0" fill="#c586c0"/><rect x="740.1" y="194.19" width="4.1" height="1.0" fill="#569cd6"/><rect x="734.3" y="195.83" width="9.0" height="1.0" fill="#cdd9e2"/><rect x="743.4" y="195.83" width="0.8" height="1.0" fill="#d4d4d4"/><rect x="744.2" y="195.83" width="4.1" height="1.0" fill="#d6d6c8"/><rect x="748.3" y="195.83" width="1.6" height="1.0" fill="#d4d4d4"/><rect x="749.9" y="195.83" width="5.7" height="1.0" fill="#d4d4d4"/><rect x="756.5" y="195.83" width="4.1" height="1.0" fill="#cdd9e2"/><rect x="760.6" y="195.83" width="2.5" height="1.0" fill="#ce9178"/><rect x="734.3" y="197.47" width="5.7" height="1.0" fill="#cdd9e2"/><rect x="740.1" y="197.47" width="0.8" height="1.0" fill="#d4d4d4"/><rect x="740.9" y="197.47" width="4.1" height="1.0" fill="#d6d6c8"/><rect x="745.0" y="197.47" width="2.5" height="1.0" fill="#d4d4d4"/><rect x="734.3" y="199.11" width="4.1" height="1.0" fill="#569cd6"/><rect x="739.3" y="199.11" width="0.8" height="1.0" fill="#d4d4d4"/><rect x="740.1" y="199.11" width="5.7" height="1.0" fill="#cdd9e2"/><rect x="745.8" y="199.11" width="0.8" height="1.0" fill="#d4d4d4"/><rect x="746.6" y="199.11" width="4.9" height="1.0" fill="#d6d6c8"/><rect x="751.6" y="199.11" width="2.5" height="1.0" fill="#d4d4d4"/><rect x="754.8" y="199.11" width="0.8" height="1.0" fill="#d4d4d4"/><rect x="756.5" y="199.11" width="4.1" height="1.0" fill="#d6d6c8"/><rect x="760.6" y="199.11" width="0.8" height="1.0" fill="#d4d4d4"/><rect x="761.4" y="199.11" width="1.6" height="1.0" fill="#b5cea8"/><rect x="763.0" y="199.11" width="1.6" height="1.0" fill="#d4d4d4"/><rect x="765.5" y="199.11" width="0.8" height="1.0" fill="#d4d4d4"/><rect x="734.3" y="200.75" width="6.6" height="1.0" fill="#569cd6"/><rect x="741.7" y="200.75" width="9.8" height="1.0" fill="#cdd9e2"/><rect x="752.4" y="200.75" width="0.8" height="1.0" fill="#d4d4d4"/><rect x="754.0" y="200.75" width="0.8" height="1.0" fill="#b5cea8"/><rect x="754.8" y="200.75" width="0.8" height="1.0" fill="#d4d4d4"/><rect x="734.3" y="202.39" width="6.6" height="1.0" fill="#569cd6"/><rect x="741.7" y="202.39" width="9.8" height="1.0" fill="#cdd9e2"/><rect x="751.6" y="202.39" width="0.8" height="1.0" fill="#d4d4d4"/><rect x="734.3" y="204.03" width="6.6" height="1.0" fill="#569cd6"/><rect x="741.7" y="204.03" width="3.3" height="1.0" fill="#cdd9e2"/><rect x="745.0" y="204.03" width="0.8" height="1.0" fill="#d4d4d4"/><rect x="734.3" y="205.67" width="6.6" height="1.0" fill="#569cd6"/><rect x="741.7" y="205.67" width="3.3" height="1.0" fill="#cdd9e2"/><rect x="745.0" y="205.67" width="0.8" height="1.0" fill="#d4d4d4"/><rect x="734.3" y="207.31" width="9.8" height="1.0" fill="#cdd9e2"/><rect x="745.0" y="207.31" width="0.8" height="1.0" fill="#d4d4d4"/><rect x="746.6" y="207.31" width="5.7" height="1.0" fill="#cdd9e2"/><rect x="752.4" y="207.31" width="0.8" height="1.0" fill="#d4d4d4"/><rect x="753.2" y="207.31" width="11.5" height="1.0" fill="#d6d6c8"/><rect x="764.7" y="207.31" width="2.5" height="1.0" fill="#d4d4d4"/><rect x="737.6" y="208.95" width="9.8" height="1.0" fill="#cdd9e2"/><rect x="748.3" y="208.95" width="0.8" height="1.0" fill="#d4d4d4"/><rect x="749.9" y="208.95" width="5.7" height="1.0" fill="#cdd9e2"/><rect x="755.7" y="208.95" width="0.8" height="1.0" fill="#d4d4d4"/><rect x="756.5" y="208.95" width="11.5" height="1.0" fill="#d6d6c8"/><rect x="768.0" y="208.95" width="2.5" height="1.0" fill="#d4d4d4"/><rect x="734.3" y="210.59" width="5.7" height="1.0" fill="#cdd9e2"/><rect x="740.1" y="210.59" width="0.8" height="1.0" fill="#d4d4d4"/><rect x="740.9" y="210.59" width="4.1" height="1.0" fill="#d6d6c8"/><rect x="745.0" y="210.59" width="2.5" height="1.0" fill="#d4d4d4"/><rect x="734.3" y="212.23" width="4.9" height="1.0" fill="#c586c0"/><rect x="740.1" y="212.23" width="4.1" height="1.0" fill="#569cd6"/><rect x="734.3" y="213.87" width="9.0" height="1.0" fill="#cdd9e2"/><rect x="743.4" y="213.87" width="0.8" height="1.0" fill="#d4d4d4"/><rect x="744.2" y="213.87" width="5.7" height="1.0" fill="#d6d6c8"/><rect x="749.9" y="213.87" width="1.6" height="1.0" fill="#d4d4d4"/><rect x="751.6" y="213.87" width="5.7" height="1.0" fill="#d4d4d4"/><rect x="758.1" y="213.87" width="2.5" height="1.0" fill="#cdd9e2"/><rect x="760.6" y="213.87" width="2.5" height="1.0" fill="#ce9178"/><rect x="734.3" y="215.51" width="4.9" height="1.0" fill="#c586c0"/><rect x="734.3" y="218.79" width="4.9" height="1.0" fill="#c586c0"/><rect x="740.1" y="218.79" width="4.1" height="1.0" fill="#569cd6"/><rect x="734.3" y="220.43" width="9.0" height="1.0" fill="#cdd9e2"/><rect x="743.4" y="220.43" width="0.8" height="1.0" fill="#d4d4d4"/><rect x="744.2" y="220.43" width="5.7" height="1.0" fill="#d6d6c8"/><rect x="749.9" y="220.43" width="1.6" height="1.0" fill="#d4d4d4"/><rect x="751.6" y="220.43" width="5.7" height="1.0" fill="#d4d4d4"/><rect x="758.1" y="220.43" width="4.1" height="1.0" fill="#cdd9e2"/><rect x="762.2" y="220.43" width="2.5" height="1.0" fill="#ce9178"/><rect x="734.3" y="222.07" width="4.9" height="1.0" fill="#c586c0"/><rect x="734.3" y="223.71" width="5.7" height="1.0" fill="#cdd9e2"/><rect x="740.1" y="223.71" width="0.8" height="1.0" fill="#d4d4d4"/><rect x="740.9" y="223.71" width="4.1" height="1.0" fill="#d6d6c8"/><rect x="745.0" y="223.71" width="2.5" height="1.0" fill="#d4d4d4"/><rect x="734.3" y="225.35" width="9.8" height="1.0" fill="#cdd9e2"/><rect x="745.0" y="225.35" width="0.8" height="1.0" fill="#d4d4d4"/><rect x="746.6" y="225.35" width="5.7" height="1.0" fill="#cdd9e2"/><rect x="752.4" y="225.35" width="0.8" height="1.0" fill="#d4d4d4"/><rect x="753.2" y="225.35" width="11.5" height="1.0" fill="#d6d6c8"/><rect x="764.7" y="225.35" width="2.5" height="1.0" fill="#d4d4d4"/><rect x="734.3" y="226.99" width="5.7" height="1.0" fill="#cdd9e2"/><rect x="740.1" y="226.99" width="0.8" height="1.0" fill="#d4d4d4"/><rect x="740.9" y="226.99" width="4.1" height="1.0" fill="#d6d6c8"/><rect x="745.0" y="226.99" width="2.5" height="1.0" fill="#d4d4d4"/><rect x="734.3" y="228.63" width="4.9" height="1.0" fill="#c586c0"/><rect x="740.1" y="228.63" width="4.1" height="1.0" fill="#569cd6"/><rect x="734.3" y="230.27" width="9.0" height="1.0" fill="#cdd9e2"/><rect x="743.4" y="230.27" width="0.8" height="1.0" fill="#d4d4d4"/><rect x="744.2" y="230.27" width="5.7" height="1.0" fill="#d6d6c8"/><rect x="749.9" y="230.27" width="1.6" height="1.0" fill="#d4d4d4"/><rect x="751.6" y="230.27" width="5.7" height="1.0" fill="#d4d4d4"/><rect x="758.1" y="230.27" width="2.5" height="1.0" fill="#cdd9e2"/><rect x="760.6" y="230.27" width="2.5" height="1.0" fill="#ce9178"/><rect x="734.3" y="231.91" width="4.9" height="1.0" fill="#c586c0"/><rect x="734.3" y="235.19" width="4.9" height="1.0" fill="#c586c0"/><rect x="740.1" y="235.19" width="4.1" height="1.0" fill="#569cd6"/><rect x="734.3" y="236.83" width="9.0" height="1.0" fill="#cdd9e2"/><rect x="743.4" y="236.83" width="0.8" height="1.0" fill="#d4d4d4"/><rect x="744.2" y="236.83" width="5.7" height="1.0" fill="#d6d6c8"/><rect x="749.9" y="236.83" width="1.6" height="1.0" fill="#d4d4d4"/><rect x="751.6" y="236.83" width="5.7" height="1.0" fill="#d4d4d4"/><rect x="758.1" y="236.83" width="4.1" height="1.0" fill="#cdd9e2"/><rect x="762.2" y="236.83" width="2.5" height="1.0" fill="#ce9178"/><rect x="734.3" y="238.47" width="4.9" height="1.0" fill="#c586c0"/><rect x="734.3" y="240.11" width="5.7" height="1.0" fill="#cdd9e2"/><rect x="740.1" y="240.11" width="0.8" height="1.0" fill="#d4d4d4"/><rect x="740.9" y="240.11" width="4.1" height="1.0" fill="#d6d6c8"/><rect x="745.0" y="240.11" width="2.5" height="1.0" fill="#d4d4d4"/><rect x="734.3" y="241.75" width="9.8" height="1.0" fill="#cdd9e2"/><rect x="745.0" y="241.75" width="0.8" height="1.0" fill="#d4d4d4"/><rect x="746.6" y="241.75" width="5.7" height="1.0" fill="#cdd9e2"/><rect x="752.4" y="241.75" width="0.8" height="1.0" fill="#d4d4d4"/><rect x="753.2" y="241.75" width="11.5" height="1.0" fill="#d6d6c8"/><rect x="764.7" y="241.75" width="2.5" height="1.0" fill="#d4d4d4"/><rect x="734.3" y="243.39" width="4.9" height="1.0" fill="#c586c0"/><rect x="740.1" y="243.39" width="4.1" height="1.0" fill="#569cd6"/><rect x="734.3" y="245.03" width="9.0" height="1.0" fill="#cdd9e2"/><rect x="743.4" y="245.03" width="0.8" height="1.0" fill="#d4d4d4"/><rect x="744.2" y="245.03" width="5.7" height="1.0" fill="#d6d6c8"/><rect x="749.9" y="245.03" width="1.6" height="1.0" fill="#d4d4d4"/><rect x="751.6" y="245.03" width="5.7" height="1.0" fill="#d4d4d4"/><rect x="758.1" y="245.03" width="6.6" height="1.0" fill="#cdd9e2"/><rect x="764.7" y="245.03" width="2.5" height="1.0" fill="#ce9178"/><rect x="734.3" y="246.67" width="4.9" height="1.0" fill="#c586c0"/><rect x="734.3" y="249.95" width="9.8" height="1.0" fill="#d6d6c8"/><rect x="744.2" y="249.95" width="0.8" height="1.0" fill="#d4d4d4"/><rect x="745.0" y="249.95" width="13.1" height="1.0" fill="#569cd6"/><rect x="758.1" y="249.95" width="0.8" height="1.0" fill="#d4d4d4"/><rect x="759.8" y="249.95" width="2.5" height="1.0" fill="#569cd6"/><rect x="762.2" y="249.95" width="1.6" height="1.0" fill="#d4d4d4"/><rect x="734.3" y="253.23" width="1.6" height="1.0" fill="#6a9955"/><rect x="736.8" y="253.23" width="3.3" height="1.0" fill="#6a9955"/><rect x="740.9" y="253.23" width="4.9" height="1.0" fill="#6a9955"/><rect x="746.6" y="253.23" width="5.7" height="1.0" fill="#6a9955"/><rect x="753.2" y="253.23" width="2.5" height="1.0" fill="#6a9955"/><rect x="756.5" y="253.23" width="5.7" height="1.0" fill="#6a9955"/><rect x="734.3" y="254.87" width="1.6" height="1.0" fill="#6a9955"/><rect x="736.8" y="254.87" width="4.9" height="1.0" fill="#6a9955"/><rect x="742.5" y="254.87" width="2.5" height="1.0" fill="#6a9955"/><rect x="745.8" y="254.87" width="6.6" height="1.0" fill="#6a9955"/><rect x="753.2" y="254.87" width="1.6" height="1.0" fill="#6a9955"/><rect x="755.7" y="254.87" width="4.9" height="1.0" fill="#6a9955"/><rect x="761.4" y="254.87" width="2.5" height="1.0" fill="#6a9955"/><rect x="764.7" y="254.87" width="4.9" height="1.0" fill="#6a9955"/><rect x="734.3" y="256.51" width="5.7" height="1.0" fill="#569cd6"/><rect x="740.9" y="256.51" width="5.7" height="1.0" fill="#cdd9e2"/><rect x="746.6" y="256.51" width="0.8" height="1.0" fill="#d4d4d4"/><rect x="747.5" y="256.51" width="1.6" height="1.0" fill="#b5cea8"/><rect x="749.1" y="256.51" width="1.6" height="1.0" fill="#d4d4d4"/><rect x="734.3" y="258.15" width="5.7" height="1.0" fill="#cdd9e2"/><rect x="740.1" y="258.15" width="0.8" height="1.0" fill="#d4d4d4"/><rect x="740.9" y="258.15" width="0.8" height="1.0" fill="#b5cea8"/><rect x="741.7" y="258.15" width="0.8" height="1.0" fill="#d4d4d4"/><rect x="743.4" y="258.15" width="0.8" height="1.0" fill="#d4d4d4"/><rect x="745.0" y="258.15" width="6.6" height="1.0" fill="#d6d6c8"/><rect x="751.6" y="258.15" width="0.8" height="1.0" fill="#d4d4d4"/><rect x="752.4" y="258.15" width="9.8" height="1.0" fill="#cdd9e2"/><rect x="762.2" y="258.15" width="1.6" height="1.0" fill="#d4d4d4"/><rect x="734.3" y="259.79" width="5.7" height="1.0" fill="#cdd9e2"/><rect x="740.1" y="259.79" width="0.8" height="1.0" fill="#d4d4d4"/><rect x="740.9" y="259.79" width="0.8" height="1.0" fill="#b5cea8"/><rect x="741.7" y="259.79" width="0.8" height="1.0" fill="#d4d4d4"/><rect x="743.4" y="259.79" width="0.8" height="1.0" fill="#d4d4d4"/><rect x="745.0" y="259.79" width="5.7" height="1.0" fill="#d6d6c8"/><rect x="750.7" y="259.79" width="0.8" height="1.0" fill="#d4d4d4"/><rect x="751.6" y="259.79" width="9.8" height="1.0" fill="#cdd9e2"/><rect x="761.4" y="259.79" width="1.6" height="1.0" fill="#d4d4d4"/><rect x="734.3" y="263.07" width="5.7" height="1.0" fill="#cdd9e2"/><rect x="740.1" y="263.07" width="0.8" height="1.0" fill="#d4d4d4"/><rect x="740.9" y="263.07" width="0.8" height="1.0" fill="#b5cea8"/><rect x="741.7" y="263.07" width="0.8" height="1.0" fill="#d4d4d4"/><rect x="743.4" y="263.07" width="0.8" height="1.0" fill="#d4d4d4"/><rect x="745.0" y="263.07" width="6.6" height="1.0" fill="#d6d6c8"/><rect x="751.6" y="263.07" width="0.8" height="1.0" fill="#d4d4d4"/><rect x="752.4" y="263.07" width="9.8" height="1.0" fill="#cdd9e2"/><rect x="762.2" y="263.07" width="1.6" height="1.0" fill="#d4d4d4"/><rect x="734.3" y="264.71" width="5.7" height="1.0" fill="#cdd9e2"/><rect x="740.1" y="264.71" width="0.8" height="1.0" fill="#d4d4d4"/><rect x="740.9" y="264.71" width="0.8" height="1.0" fill="#b5cea8"/><rect x="741.7" y="264.71" width="0.8" height="1.0" fill="#d4d4d4"/><rect x="743.4" y="264.71" width="0.8" height="1.0" fill="#d4d4d4"/><rect x="745.0" y="264.71" width="5.7" height="1.0" fill="#d6d6c8"/><rect x="750.7" y="264.71" width="0.8" height="1.0" fill="#d4d4d4"/><rect x="751.6" y="264.71" width="9.8" height="1.0" fill="#cdd9e2"/><rect x="761.4" y="264.71" width="1.6" height="1.0" fill="#d4d4d4"/><rect x="734.3" y="266.35" width="5.7" height="1.0" fill="#cdd9e2"/><rect x="740.1" y="266.35" width="0.8" height="1.0" fill="#d4d4d4"/><rect x="740.9" y="266.35" width="0.8" height="1.0" fill="#b5cea8"/><rect x="741.7" y="266.35" width="0.8" height="1.0" fill="#d4d4d4"/><rect x="743.4" y="266.35" width="0.8" height="1.0" fill="#d4d4d4"/><rect x="745.0" y="266.35" width="6.6" height="1.0" fill="#d6d6c8"/><rect x="751.6" y="266.35" width="0.8" height="1.0" fill="#d4d4d4"/><rect x="752.4" y="266.35" width="3.3" height="1.0" fill="#cdd9e2"/><rect x="755.7" y="266.35" width="1.6" height="1.0" fill="#d4d4d4"/><rect x="734.3" y="269.63" width="5.7" height="1.0" fill="#cdd9e2"/><rect x="740.1" y="269.63" width="0.8" height="1.0" fill="#d4d4d4"/><rect x="740.9" y="269.63" width="0.8" height="1.0" fill="#b5cea8"/><rect x="741.7" y="269.63" width="0.8" height="1.0" fill="#d4d4d4"/><rect x="743.4" y="269.63" width="0.8" height="1.0" fill="#d4d4d4"/><rect x="745.0" y="269.63" width="5.7" height="1.0" fill="#d6d6c8"/><rect x="750.7" y="269.63" width="0.8" height="1.0" fill="#d4d4d4"/><rect x="751.6" y="269.63" width="9.8" height="1.0" fill="#cdd9e2"/><rect x="761.4" y="269.63" width="1.6" height="1.0" fill="#d4d4d4"/><rect x="734.3" y="271.27" width="5.7" height="1.0" fill="#cdd9e2"/><rect x="740.1" y="271.27" width="0.8" height="1.0" fill="#d4d4d4"/><rect x="740.9" y="271.27" width="0.8" height="1.0" fill="#b5cea8"/><rect x="741.7" y="271.27" width="0.8" height="1.0" fill="#d4d4d4"/><rect x="743.4" y="271.27" width="0.8" height="1.0" fill="#d4d4d4"/><rect x="745.0" y="271.27" width="6.6" height="1.0" fill="#d6d6c8"/><rect x="751.6" y="271.27" width="0.8" height="1.0" fill="#d4d4d4"/><rect x="752.4" y="271.27" width="3.3" height="1.0" fill="#cdd9e2"/><rect x="755.7" y="271.27" width="1.6" height="1.0" fill="#d4d4d4"/><rect x="734.3" y="274.55" width="5.7" height="1.0" fill="#cdd9e2"/><rect x="740.1" y="274.55" width="0.8" height="1.0" fill="#d4d4d4"/><rect x="740.9" y="274.55" width="0.8" height="1.0" fill="#b5cea8"/><rect x="741.7" y="274.55" width="0.8" height="1.0" fill="#d4d4d4"/><rect x="743.4" y="274.55" width="0.8" height="1.0" fill="#d4d4d4"/><rect x="745.0" y="274.55" width="5.7" height="1.0" fill="#d6d6c8"/><rect x="750.7" y="274.55" width="0.8" height="1.0" fill="#d4d4d4"/><rect x="751.6" y="274.55" width="9.8" height="1.0" fill="#cdd9e2"/><rect x="761.4" y="274.55" width="1.6" height="1.0" fill="#d4d4d4"/><rect x="734.3" y="276.19" width="5.7" height="1.0" fill="#cdd9e2"/><rect x="740.1" y="276.19" width="0.8" height="1.0" fill="#d4d4d4"/><rect x="740.9" y="276.19" width="0.8" height="1.0" fill="#b5cea8"/><rect x="741.7" y="276.19" width="0.8" height="1.0" fill="#d4d4d4"/><rect x="743.4" y="276.19" width="0.8" height="1.0" fill="#d4d4d4"/><rect x="745.0" y="276.19" width="6.6" height="1.0" fill="#d6d6c8"/><rect x="751.6" y="276.19" width="0.8" height="1.0" fill="#d4d4d4"/><rect x="752.4" y="276.19" width="4.1" height="1.0" fill="#cdd9e2"/><rect x="756.5" y="276.19" width="1.6" height="1.0" fill="#d4d4d4"/><rect x="734.3" y="279.47" width="4.9" height="1.0" fill="#c586c0"/><rect x="740.1" y="279.47" width="4.1" height="1.0" fill="#569cd6"/><rect x="734.3" y="281.11" width="9.0" height="1.0" fill="#cdd9e2"/><rect x="743.4" y="281.11" width="0.8" height="1.0" fill="#d4d4d4"/><rect x="744.2" y="281.11" width="4.1" height="1.0" fill="#d6d6c8"/><rect x="748.3" y="281.11" width="1.6" height="1.0" fill="#d4d4d4"/><rect x="749.9" y="281.11" width="9.8" height="1.0" fill="#d4d4d4"/><rect x="759.8" y="281.11" width="0.8" height="1.0" fill="#d4d4d4"/><rect x="761.4" y="281.11" width="2.5" height="1.0" fill="#ce9178"/><rect x="764.7" y="281.11" width="9.0" height="1.0" fill="#cdd9e2"/><rect x="773.7" y="281.11" width="0.8" height="1.0" fill="#d4d4d4"/><rect x="774.5" y="281.11" width="5.7" height="1.0" fill="#d6d6c8"/><rect x="780.3" y="281.11" width="0.8" height="1.0" fill="#d4d4d4"/><rect x="781.1" y="281.11" width="1.6" height="1.0" fill="#cdd9e2"/><rect x="782.7" y="281.11" width="1.6" height="1.0" fill="#d4d4d4"/><rect x="734.3" y="282.75" width="9.0" height="1.0" fill="#cdd9e2"/><rect x="743.4" y="282.75" width="0.8" height="1.0" fill="#d4d4d4"/><rect x="744.2" y="282.75" width="4.1" height="1.0" fill="#d6d6c8"/><rect x="748.3" y="282.75" width="1.6" height="1.0" fill="#d4d4d4"/><rect x="749.9" y="282.75" width="9.8" height="1.0" fill="#d4d4d4"/><rect x="759.8" y="282.75" width="0.8" height="1.0" fill="#d4d4d4"/><rect x="761.4" y="282.75" width="2.5" height="1.0" fill="#ce9178"/><rect x="764.7" y="282.75" width="9.0" height="1.0" fill="#cdd9e2"/><rect x="773.7" y="282.75" width="0.8" height="1.0" fill="#d4d4d4"/><rect x="774.5" y="282.75" width="5.7" height="1.0" fill="#d6d6c8"/><rect x="780.3" y="282.75" width="0.8" height="1.0" fill="#d4d4d4"/><rect x="781.1" y="282.75" width="1.6" height="1.0" fill="#cdd9e2"/><rect x="782.7" y="282.75" width="1.6" height="1.0" fill="#d4d4d4"/><rect x="734.3" y="284.39" width="9.0" height="1.0" fill="#cdd9e2"/><rect x="743.4" y="284.39" width="0.8" height="1.0" fill="#d4d4d4"/><rect x="744.2" y="284.39" width="4.1" height="1.0" fill="#d6d6c8"/><rect x="748.3" y="284.39" width="1.6" height="1.0" fill="#d4d4d4"/><rect x="749.9" y="284.39" width="9.8" height="1.0" fill="#d4d4d4"/><rect x="759.8" y="284.39" width="0.8" height="1.0" fill="#d4d4d4"/><rect x="761.4" y="284.39" width="2.5" height="1.0" fill="#ce9178"/><rect x="734.3" y="286.03" width="9.0" height="1.0" fill="#cdd9e2"/><rect x="743.4" y="286.03" width="0.8" height="1.0" fill="#d4d4d4"/><rect x="744.2" y="286.03" width="5.7" height="1.0" fill="#d6d6c8"/><rect x="749.9" y="286.03" width="0.8" height="1.0" fill="#d4d4d4"/><rect x="750.7" y="286.03" width="9.8" height="1.0" fill="#cdd9e2"/><rect x="760.6" y="286.03" width="1.6" height="1.0" fill="#d4d4d4"/><rect x="734.3" y="287.67" width="9.0" height="1.0" fill="#cdd9e2"/><rect x="743.4" y="287.67" width="0.8" height="1.0" fill="#d4d4d4"/><rect x="744.2" y="287.67" width="4.1" height="1.0" fill="#d6d6c8"/><rect x="748.3" y="287.67" width="1.6" height="1.0" fill="#d4d4d4"/><rect x="749.9" y="287.67" width="9.8" height="1.0" fill="#d4d4d4"/><rect x="759.8" y="287.67" width="0.8" height="1.0" fill="#d4d4d4"/><rect x="761.4" y="287.67" width="2.5" height="1.0" fill="#ce9178"/><rect x="734.3" y="289.31" width="9.0" height="1.0" fill="#cdd9e2"/><rect x="743.4" y="289.31" width="0.8" height="1.0" fill="#d4d4d4"/><rect x="744.2" y="289.31" width="5.7" height="1.0" fill="#d6d6c8"/><rect x="749.9" y="289.31" width="0.8" height="1.0" fill="#d4d4d4"/><rect x="750.7" y="289.31" width="9.8" height="1.0" fill="#cdd9e2"/><rect x="760.6" y="289.31" width="1.6" height="1.0" fill="#d4d4d4"/><rect x="734.3" y="290.95" width="9.0" height="1.0" fill="#cdd9e2"/><rect x="743.4" y="290.95" width="0.8" height="1.0" fill="#d4d4d4"/><rect x="744.2" y="290.95" width="4.1" height="1.0" fill="#d6d6c8"/><rect x="748.3" y="290.95" width="1.6" height="1.0" fill="#d4d4d4"/><rect x="749.9" y="290.95" width="5.7" height="1.0" fill="#d4d4d4"/><rect x="755.7" y="290.95" width="0.8" height="1.0" fill="#d4d4d4"/><rect x="757.3" y="290.95" width="2.5" height="1.0" fill="#ce9178"/><rect x="734.3" y="292.59" width="9.0" height="1.0" fill="#cdd9e2"/><rect x="743.4" y="292.59" width="0.8" height="1.0" fill="#d4d4d4"/><rect x="744.2" y="292.59" width="5.7" height="1.0" fill="#d6d6c8"/><rect x="749.9" y="292.59" width="0.8" height="1.0" fill="#d4d4d4"/><rect x="750.7" y="292.59" width="5.7" height="1.0" fill="#cdd9e2"/><rect x="756.5" y="292.59" width="1.6" height="1.0" fill="#d4d4d4"/><rect x="734.3" y="294.23" width="9.0" height="1.0" fill="#cdd9e2"/><rect x="743.4" y="294.23" width="0.8" height="1.0" fill="#d4d4d4"/><rect x="744.2" y="294.23" width="4.1" height="1.0" fill="#d6d6c8"/><rect x="748.3" y="294.23" width="1.6" height="1.0" fill="#d4d4d4"/><rect x="749.9" y="294.23" width="5.7" height="1.0" fill="#d4d4d4"/><rect x="755.7" y="294.23" width="2.5" height="1.0" fill="#ce9178"/><rect x="734.3" y="295.87" width="9.0" height="1.0" fill="#cdd9e2"/><rect x="743.4" y="295.87" width="0.8" height="1.0" fill="#d4d4d4"/><rect x="744.2" y="295.87" width="4.1" height="1.0" fill="#d6d6c8"/><rect x="748.3" y="295.87" width="0.8" height="1.0" fill="#d4d4d4"/><rect x="749.1" y="295.87" width="0.8" height="1.0" fill="#d4d4d4"/><rect x="749.9" y="295.87" width="1.6" height="1.0" fill="#d4d4d4"/><rect x="751.6" y="295.87" width="4.1" height="1.0" fill="#cdd9e2"/><rect x="755.7" y="295.87" width="3.3" height="1.0" fill="#ce9178"/><rect x="734.3" y="297.51" width="4.9" height="1.0" fill="#c586c0"/><rect x="734.3" y="300.79" width="1.6" height="1.0" fill="#6a9955"/><rect x="736.8" y="300.79" width="3.3" height="1.0" fill="#6a9955"/><rect x="740.9" y="300.79" width="1.6" height="1.0" fill="#6a9955"/><rect x="743.4" y="300.79" width="2.5" height="1.0" fill="#6a9955"/><rect x="734.3" y="302.43" width="2.5" height="1.0" fill="#cdd9e2"/><rect x="736.8" y="302.43" width="0.8" height="1.0" fill="#d4d4d4"/><rect x="737.6" y="302.43" width="7.4" height="1.0" fill="#d6d6c8"/><rect x="745.0" y="302.43" width="0.8" height="1.0" fill="#d4d4d4"/><rect x="745.8" y="302.43" width="5.7" height="1.0" fill="#cdd9e2"/><rect x="751.6" y="302.43" width="0.8" height="1.0" fill="#d4d4d4"/><rect x="753.2" y="302.43" width="4.9" height="1.0" fill="#d6d6c8"/><rect x="758.1" y="302.43" width="0.8" height="1.0" fill="#d4d4d4"/><rect x="758.9" y="302.43" width="5.7" height="1.0" fill="#cdd9e2"/><rect x="764.7" y="302.43" width="2.5" height="1.0" fill="#d4d4d4"/><rect x="734.3" y="304.07" width="2.5" height="1.0" fill="#cdd9e2"/><rect x="736.8" y="304.07" width="0.8" height="1.0" fill="#d4d4d4"/><rect x="737.6" y="304.07" width="4.1" height="1.0" fill="#d6d6c8"/><rect x="741.7" y="304.07" width="0.8" height="1.0" fill="#d4d4d4"/><rect x="742.5" y="304.07" width="9.8" height="1.0" fill="#569cd6"/><rect x="752.4" y="304.07" width="1.6" height="1.0" fill="#d4d4d4"/><rect x="734.3" y="307.35" width="1.6" height="1.0" fill="#6a9955"/><rect x="736.8" y="307.35" width="4.1" height="1.0" fill="#6a9955"/><rect x="741.7" y="307.35" width="1.6" height="1.0" fill="#6a9955"/><rect x="744.2" y="307.35" width="1.6" height="1.0" fill="#6a9955"/><rect x="746.6" y="307.35" width="4.9" height="1.0" fill="#6a9955"/><rect x="752.4" y="307.35" width="5.7" height="1.0" fill="#6a9955"/><rect x="758.9" y="307.35" width="1.6" height="1.0" fill="#6a9955"/><rect x="761.4" y="307.35" width="2.5" height="1.0" fill="#6a9955"/><rect x="764.7" y="307.35" width="2.5" height="1.0" fill="#6a9955"/><rect x="768.0" y="307.35" width="6.6" height="1.0" fill="#6a9955"/><rect x="775.3" y="307.35" width="4.1" height="1.0" fill="#6a9955"/><rect x="780.3" y="307.35" width="4.1" height="1.0" fill="#6a9955"/><rect x="734.3" y="308.99" width="6.6" height="1.0" fill="#d6d6c8"/><rect x="740.9" y="308.99" width="0.8" height="1.0" fill="#d4d4d4"/><rect x="741.7" y="308.99" width="0.8" height="1.0" fill="#b5cea8"/><rect x="742.5" y="308.99" width="1.6" height="1.0" fill="#d4d4d4"/><rect x="734.3" y="310.63" width="1.6" height="1.0" fill="#6a9955"/><rect x="736.8" y="310.63" width="3.3" height="1.0" fill="#6a9955"/><rect x="740.9" y="310.63" width="3.3" height="1.0" fill="#6a9955"/><rect x="745.0" y="310.63" width="2.5" height="1.0" fill="#6a9955"/><rect x="748.3" y="310.63" width="0.8" height="1.0" fill="#6a9955"/><rect x="749.9" y="310.63" width="0.8" height="1.0" fill="#6a9955"/><rect x="751.6" y="310.63" width="2.5" height="1.0" fill="#6a9955"/><rect x="754.8" y="310.63" width="3.3" height="1.0" fill="#6a9955"/><rect x="758.9" y="310.63" width="1.6" height="1.0" fill="#6a9955"/><rect x="761.4" y="310.63" width="5.7" height="1.0" fill="#6a9955"/><rect x="768.0" y="310.63" width="4.1" height="1.0" fill="#6a9955"/><rect x="772.9" y="310.63" width="3.3" height="1.0" fill="#6a9955"/><rect x="777.0" y="310.63" width="2.5" height="1.0" fill="#6a9955"/><rect x="780.3" y="310.63" width="4.9" height="1.0" fill="#6a9955"/><rect x="734.3" y="312.27" width="2.5" height="1.0" fill="#569cd6"/><rect x="737.6" y="312.27" width="4.1" height="1.0" fill="#cdd9e2"/><rect x="742.5" y="312.27" width="0.8" height="1.0" fill="#d4d4d4"/><rect x="744.2" y="312.27" width="0.8" height="1.0" fill="#b5cea8"/><rect x="745.0" y="312.27" width="0.8" height="1.0" fill="#d4d4d4"/><rect x="734.3" y="313.91" width="1.6" height="1.0" fill="#6a9955"/><rect x="736.8" y="313.91" width="2.5" height="1.0" fill="#6a9955"/><rect x="740.1" y="313.91" width="6.6" height="1.0" fill="#6a9955"/><rect x="747.5" y="313.91" width="5.7" height="1.0" fill="#6a9955"/><rect x="754.0" y="313.91" width="1.6" height="1.0" fill="#6a9955"/><rect x="756.5" y="313.91" width="2.5" height="1.0" fill="#6a9955"/><rect x="759.8" y="313.91" width="4.9" height="1.0" fill="#6a9955"/><rect x="765.5" y="313.91" width="5.7" height="1.0" fill="#6a9955"/><rect x="772.1" y="313.91" width="3.3" height="1.0" fill="#6a9955"/><rect x="776.2" y="313.91" width="3.3" height="1.0" fill="#6a9955"/><rect x="780.3" y="313.91" width="3.3" height="1.0" fill="#6a9955"/><rect x="784.4" y="313.91" width="4.9" height="1.0" fill="#6a9955"/><rect x="790.1" y="313.91" width="3.3" height="1.0" fill="#6a9955"/><rect x="794.2" y="313.91" width="4.1" height="1.0" fill="#6a9955"/><rect x="734.3" y="315.55" width="4.1" height="1.0" fill="#d6d6c8"/><rect x="738.4" y="315.55" width="0.8" height="1.0" fill="#d4d4d4"/><rect x="739.3" y="315.55" width="1.6" height="1.0" fill="#b5cea8"/><rect x="740.9" y="315.55" width="1.6" height="1.0" fill="#d4d4d4"/><rect x="734.3" y="317.19" width="2.5" height="1.0" fill="#569cd6"/><rect x="737.6" y="317.19" width="0.8" height="1.0" fill="#d4d4d4"/><rect x="738.4" y="317.19" width="2.5" height="1.0" fill="#569cd6"/><rect x="741.7" y="317.19" width="0.8" height="1.0" fill="#cdd9e2"/><rect x="743.4" y="317.19" width="0.8" height="1.0" fill="#d4d4d4"/><rect x="745.0" y="317.19" width="0.8" height="1.0" fill="#b5cea8"/><rect x="745.8" y="317.19" width="0.8" height="1.0" fill="#d4d4d4"/><rect x="747.5" y="317.19" width="0.8" height="1.0" fill="#cdd9e2"/><rect x="749.1" y="317.19" width="0.8" height="1.0" fill="#d4d4d4"/><rect x="750.7" y="317.19" width="9.8" height="1.0" fill="#569cd6"/><rect x="761.4" y="317.19" width="0.8" height="1.0" fill="#d4d4d4"/><rect x="763.0" y="317.19" width="3.3" height="1.0" fill="#b5cea8"/><rect x="766.3" y="317.19" width="0.8" height="1.0" fill="#d4d4d4"/><rect x="768.0" y="317.19" width="0.8" height="1.0" fill="#cdd9e2"/><rect x="768.8" y="317.19" width="2.5" height="1.0" fill="#d4d4d4"/><rect x="772.1" y="317.19" width="0.8" height="1.0" fill="#d4d4d4"/><rect x="736.0" y="318.83" width="1.6" height="1.0" fill="#6a9955"/><rect x="738.4" y="318.83" width="5.7" height="1.0" fill="#6a9955"/><rect x="745.0" y="318.83" width="2.5" height="1.0" fill="#6a9955"/><rect x="748.3" y="318.83" width="5.7" height="1.0" fill="#6a9955"/><rect x="754.8" y="318.83" width="2.5" height="1.0" fill="#6a9955"/><rect x="758.1" y="318.83" width="2.5" height="1.0" fill="#6a9955"/><rect x="761.4" y="318.83" width="4.9" height="1.0" fill="#6a9955"/><rect x="767.1" y="318.83" width="6.6" height="1.0" fill="#6a9955"/><rect x="774.5" y="318.83" width="4.1" height="1.0" fill="#6a9955"/><rect x="779.4" y="318.83" width="5.7" height="1.0" fill="#6a9955"/><rect x="734.3" y="320.47" width="6.6" height="1.0" fill="#d4d4d4"/><rect x="740.9" y="320.47" width="0.8" height="1.0" fill="#d4d4d4"/><rect x="741.7" y="320.47" width="7.4" height="1.0" fill="#d6d6c8"/><rect x="749.1" y="320.47" width="0.8" height="1.0" fill="#d4d4d4"/><rect x="749.9" y="320.47" width="6.6" height="1.0" fill="#569cd6"/><rect x="756.5" y="320.47" width="0.8" height="1.0" fill="#d4d4d4"/><rect x="758.1" y="320.47" width="5.7" height="1.0" fill="#569cd6"/><rect x="763.9" y="320.47" width="0.8" height="1.0" fill="#d4d4d4"/><rect x="765.5" y="320.47" width="5.7" height="1.0" fill="#569cd6"/><rect x="771.2" y="320.47" width="1.6" height="1.0" fill="#d4d4d4"/><rect x="736.0" y="322.11" width="9.8" height="1.0" fill="#d6d6c8"/><rect x="745.8" y="322.11" width="0.8" height="1.0" fill="#d4d4d4"/><rect x="746.6" y="322.11" width="2.5" height="1.0" fill="#569cd6"/><rect x="749.1" y="322.11" width="0.8" height="1.0" fill="#d4d4d4"/><rect x="750.7" y="322.11" width="2.5" height="1.0" fill="#569cd6"/><rect x="753.2" y="322.11" width="1.6" height="1.0" fill="#d4d4d4"/><rect x="732.7" y="323.75" width="0.8" height="1.0" fill="#d4d4d4"/><rect x="732.7" y="327.03" width="3.3" height="1.0" fill="#569cd6"/><rect x="736.8" y="327.03" width="4.1" height="1.0" fill="#d6d6c8"/><rect x="740.9" y="327.03" width="1.6" height="1.0" fill="#d4d4d4"/><rect x="732.7" y="328.67" width="0.8" height="1.0" fill="#d4d4d4"/><rect x="734.3" y="330.31" width="8.2" height="1.0" fill="#cdd9e2"/><rect x="742.5" y="330.31" width="0.8" height="1.0" fill="#d4d4d4"/><rect x="743.4" y="330.31" width="12.3" height="1.0" fill="#d6d6c8"/><rect x="755.7" y="330.31" width="0.8" height="1.0" fill="#d4d4d4"/><rect x="756.5" y="330.31" width="4.9" height="1.0" fill="#569cd6"/><rect x="761.4" y="330.31" width="1.6" height="1.0" fill="#d4d4d4"/><rect x="732.7" y="331.95" width="0.8" height="1.0" fill="#d4d4d4"/></g><rect x="732.7" y="53.05" width="86.8" height="1.5" fill="#8e1717"/><rect x="732.7" y="53.05" width="21.3" height="1.5" fill="#f41c1c"/><rect x="732.7" y="56.33" width="86.8" height="1.5" fill="#8e1717"/><rect x="732.7" y="56.33" width="27.9" height="1.5" fill="#f41c1c"/><rect x="732.7" y="121.9" width="86.8" height="1.3" fill="#224a70"/><rect x="727.6" y="74.4" width="1.7" height="1.6" fill="#0c9dc4"/><rect x="727.6" y="80.9" width="1.7" height="1.7" fill="#7a9e0c"/><rect x="727.6" y="122.0" width="1.7" height="1.7" fill="#7a9e0c"/><rect x="727.6" y="138.4" width="1.7" height="1.6" fill="#0c9dc4"/><rect x="727.6" y="197.5" width="1.7" height="3.7" fill="#7a9e0c"/><rect x="727.6" y="202.0" width="1.7" height="4.2" fill="#7a9e0c"/><rect x="727.6" y="212.2" width="1.7" height="1.6" fill="#0c9dc4"/><rect x="727.6" y="228.8" width="1.7" height="1.6" fill="#0c9dc4"/><rect x="727.6" y="240.1" width="1.7" height="1.6" fill="#c4261c"/><rect x="727.6" y="243.5" width="1.7" height="1.6" fill="#0c9dc4"/><rect x="727.6" y="248.4" width="1.7" height="3.4" fill="#7a9e0c"/><rect x="819.5" y="46.5" width="11.5" height="65.5" fill="#424242"/><rect x="827.8" y="52.7" width="3.2" height="10" fill="#a03a3a"/><rect x="820.7" y="82.7" width="3" height="5.0" fill="#19639a"/><rect x="820.7" y="92.0" width="3" height="4.4" fill="#19639a"/><rect x="820.7" y="148.7" width="3" height="4.1" fill="#19639a"/><rect x="820.7" y="170.4" width="3" height="5.0" fill="#19639a"/><rect x="820.7" y="252.6" width="3" height="5.0" fill="#19639a"/><rect x="820.7" y="259.3" width="3" height="4.5" fill="#19639a"/><rect x="820.7" y="271.5" width="3" height="5.0" fill="#19639a"/><rect x="820.7" y="294.3" width="3" height="5.1" fill="#19639a"/><rect x="820.7" y="309.9" width="3" height="9.5" fill="#19639a"/><rect x="820.7" y="322.2" width="3" height="5.0" fill="#19639a"/><rect x="820.7" y="149.3" width="10.3" height="1.6" fill="#a8a8a8"/></svg>
</div>
<div id="tabs" class="abs">
<div class="abs" style="left:0;top:0;width:181.7px;height:28px;background:#1e1e1e"></div>
<div class="abs" style="left:182px;top:0;width:98px;height:28px;background:#2d2d2d"></div>
</div>
<div id="panel" class="abs">
<div class="abs" style="left:97px;top:25px;width:35px;height:1px;background:#e7e7e7"></div>
<div class="abs" style="left:66.7px;top:7.4px;width:15px;height:15px;border-radius:8px;background:#4d4d4d"></div>
<div class="abs" style="left:545px;top:5px;width:139.7px;height:18.4px;background:#3c3c3c"></div>
<div id="outarea" class="abs">
<div class="out" style="top:-2.90px">Temperature1: 238</div>
<div class="out" style="top:12.68px">Capacitance2: 180</div>
<div class="out" style="top:28.26px">Capacitance3: 179</div>
<div class="out" style="top:43.84px">Voltage: 132</div>
<div class="out" style="top:59.42px">Sending: mac tx uncnf 1 008400BC00EE00B400B3</div>
<div class="out" style="top:75.00px">Successful transmission</div>
<div class="out" style="top:90.58px">Sending: sys sleep 10000</div>
<div class="out" style="top:106.16px">-- LOOP</div>
<div class="out" style="top:121.74px">Sensor1 begin</div>
<div class="out" style="top:137.32px">Sensor1 end</div>
<div class="out" style="top:152.90px">Sensor2 begin</div>
<div class="out" style="top:168.48px">Sensor2 end</div>
<div class="out" style="top:184.06px">Sensor3 begin</div>
<div class="out" style="top:199.64px">Sensor3 complete</div>
<div class="out" style="top:215.22px">Capacitance1: 183</div>
<div class="out" style="top:230.80px">Temperature1: 238</div>
<div class="out" style="top:246.38px">Capacitance2: 181</div>
<div class="out" style="top:261.96px">Capacitance3: 180</div>
<div class="out" style="top:277.54px">Voltage: 128</div>
<div class="out" style="top:293.12px">Sending: mac tx uncnf 1 008000B700EE00B500B4</div>
<div class="abs" style="left:0;top:0;width:820px;height:3px;background:linear-gradient(#000 0%,rgba(0,0,0,0) 100%);opacity:.55"></div>
</div>
<div class="abs" style="left:820px;top:28px;width:1px;height:323px;background:#303030"></div>
</div>
<div id="status" class="abs"></div>
<svg width="1106" height="899" viewBox="0 0 1106 899" style="left:0;top:0" fill="none" stroke-linecap="round" stroke-linejoin="round">
<!-- vscode logo -->
<g>
<path d="M17.6 5.7 L21.9 7.6 L21.9 17.2 L17.6 19.2 Z" fill="#2ab2fb" stroke="none"/>
<path d="M17.6 5.7 L8.6 14.6 L9.7 15.9 L17.6 9.6 Z" fill="#1f9cf0" stroke="none"/>
<path d="M17.6 19.2 L8.6 10.3 L9.7 9 L17.6 15.3 Z" fill="#1a8fe0" stroke="none"/>
</g>
<!-- window controls -->
<g stroke="#d0d0d0" stroke-width="1">
<path d="M1007.2 12.8H1017.1"/>
<rect x="1045.1" y="8.3" width="8.8" height="8.2"/>
<path d="M1082.8 8L1091.6 16.8M1091.6 8L1082.8 16.8"/>
</g>
<!-- activity bar -->
<rect x="0" y="25" width="2" height="39" fill="#fff" stroke="none"/>
<g stroke="#fff" stroke-width="1.7">
<path d="M17.6 35.1H24.2L27.4 38.3V47Q27.4 48.4 26 48.4H17.6Q16.2 48.4 16.2 47V36.5Q16.2 35.1 17.6 35.1Z"/>
<path d="M23.2 35.3V39.4H27.2" stroke-width="1.5"/>
<path d="M16.2 39.9H12.3Q10.9 39.9 10.9 41.3V52.4Q10.9 53.8 12.3 53.8H21.4Q22.8 53.8 22.8 52.4V48.6"/>
</g>
<g stroke="#8a8986" stroke-width="1.35">
<circle cx="22.6" cy="84.2" r="6.3"/>
<path d="M18 88.9L11.2 96.2"/>
<circle cx="15.7" cy="123.2" r="2.5"/><circle cx="15.7" cy="135.7" r="2.5"/><circle cx="24.1" cy="126.8" r="2.5"/>
<path d="M15.7 125.8V133.1M24.1 129.4Q24.1 133.5 18 135.2"/>
<!-- bug -->
<path d="M14.3 170.2Q14.3 166.2 19.8 166.2Q25.3 166.2 25.3 170.2V174.5Q25.3 181 19.8 181Q14.3 181 14.3 174.5Z"/>
<path d="M16.2 167.2Q16.5 163 19.8 163Q23.1 163 23.4 167.2"/>
<path d="M14.2 169L11.2 165.4M14.2 174H10M14.8 178L11.6 181.4M25.4 169L28.4 165.4M25.4 174H29.6M24.8 178L28 181.4"/>
<path d="M17.3 171.6L22.3 176.6M22.3 171.6L17.3 176.6"/>
<!-- extensions -->
<path d="M18 217V210.8Q18 209.6 16.8 209.6H11.4Q10.2 209.6 10.2 210.8V223.2Q10.2 224.4 11.4 224.4H24.6Q25.8 224.4 25.8 223.2V218.2Q25.8 217 24.6 217H10.2M18 217V224.4"/>
<rect x="21.6" y="205.6" width="7.7" height="7.4" rx="1.2"/>
<!-- gear -->
<circle cx="20.1" cy="857.8" r="2.9"/>
<path d="M18.2 848.4L22.0 848.4L22.4 852.3L25.4 849.8L28.1 852.5L25.6 855.5L29.5 855.9L29.5 859.7L25.6 860.1L28.1 863.1L25.4 865.8L22.4 863.3L22.0 867.2L18.2 867.2L17.8 863.3L14.8 865.8L12.1 863.1L14.6 860.1L10.7 859.7L10.7 855.9L14.6 855.5L12.1 852.5L14.8 849.8L17.8 852.3Z" stroke-linejoin="miter"/>
</g>
<circle cx="26.2" cy="136.9" r="6.6" fill="#0a7ad0" stroke="none"/>
<!-- sidebar chevrons / close -->
<g stroke="#ccc" stroke-width="1.05">
<path d="M43.3 60.5L47.6 64.3L51.9 60.5"/>
<path d="M43.3 114.6L47.6 118.4L51.9 114.6"/>
<path d="M57.4 77.2L64.8 83.9M64.8 77.2L57.4 83.9"/>
<path d="M54.4 133.2L58.5 137.2L62.6 133.2"/>
<path d="M56.6 185.6L60.8 189.4L56.6 193.2"/>
<path d="M45.3 850.1L49.5 853.9L45.3 857.7"/>
<path d="M45.3 868L49.5 871.8L45.3 875.6"/>
</g>
<circle cx="257.2" cy="189.2" r="3.3" fill="#8c7d62" stroke="none"/>
<!-- file type icons -->
<g stroke-width="2.1" stroke-linecap="butt">
<path d="M77.04 77.78A2.9 3.45 0 1 0 77.04 83.22" stroke="#4f9cc4"/>
<path d="M58.77 204.14A2.8 3.5 0 1 0 58.77 209.66" stroke="#4f9cc4"/>
<path d="M292.07 37.54A2.8 3.25 0 1 0 292.07 42.66" stroke="#4f9cc4"/>
<path d="M296.54 60.73A2.5 2.75 0 1 0 296.54 65.07" stroke="#4f9cc4"/>
<path d="M78.52 96.05A3.2 3.4 0 1 0 78.52 100.95" stroke="#a577cf" stroke-width="2.2"/>
<path d="M60.39 222.70A3.3 3.2 0 1 0 60.39 227.30" stroke="#a577cf" stroke-width="2.2"/>
<path d="M477.35 37.80A3.1 3.2 0 1 0 477.35 42.40" stroke="#a577cf" stroke-width="2.2"/>
</g>
<g stroke="#4f9cc4" stroke-width="1" stroke-linecap="butt">
<path d="M77.0 80.5H81.0M79.0 78.7V82.3"/>
<path d="M58.9 206.9H62.9M60.9 205.1V208.7"/>
<path d="M292.1 40.1H296.1M294.1 38.3V41.9"/>
<path d="M296.5 62.9H300.5M298.5 61.1V64.7"/>
</g>
<!-- tab close, breadcrumb chevron, cube -->
<g stroke="#ddd" stroke-width="1.05"><path d="M440.4 36.6L447.4 43.6M447.4 36.6L440.4 43.6"/></g>
<g stroke="#a9a9a9" stroke-width="1.05"><path d="M443.2 59.2L447.3 63L443.2 66.8"/></g>
<g stroke="#b180d7" stroke-width="1"><path d="M458.6 57.8L463.6 60.3V65.7L458.6 68.2L453.6 65.7V60.3ZM453.8 60.4L458.6 62.8L463.4 60.4M458.6 62.8V68"/></g>
<!-- editor actions -->
<g stroke="#cdcdcd" stroke-width="1.3" stroke-linecap="butt" stroke-linejoin="miter">
<path d="M974.5 37.7V44.8H985V37.7"/>
</g>
<path d="M978.9 32.5H980.5V34.9H983.1L979.7 37.9L976.2 34.9H978.9Z" fill="#e8e8e8" stroke="none"/>
<g fill="#12c6d2" stroke="none">
<rect x="975.6" y="39.4" width="1.9" height="1.8"/><rect x="978.7" y="39.4" width="1.9" height="1.8"/><rect x="981.9" y="39.4" width="1.9" height="1.8"/>
<rect x="977.1" y="41.9" width="1.9" height="1.7"/><rect x="980.3" y="41.9" width="1.9" height="1.7"/>
</g>
<g stroke="none">
<rect x="1001" y="34.6" width="3.8" height="1.5" fill="#e4e4e4"/><rect x="1006" y="34.6" width="5" height="1.5" fill="#e4e4e4"/>
<rect x="1002.8" y="37.3" width="3.8" height="1.3" fill="#9a9a9a"/><rect x="1008.2" y="37.3" width="2.2" height="1.1" fill="#777"/>
<rect x="1002.8" y="39.9" width="4" height="1.1" fill="#d8d8d8"/>
<rect x="1001" y="42.2" width="2.7" height="1.4" fill="#d0d0d0"/>
</g>
<path d="M1005.1 42.7L1006.8 44.8L1010.3 38.7" stroke="#10b4c4" stroke-width="1.5" stroke-linecap="butt" stroke-linejoin="miter"/>
<g stroke="#bdbdbd" stroke-width="1.1">
<circle cx="1028.3" cy="35.3" r="1.25"/><circle cx="1036.1" cy="43.1" r="1.3"/>
<path d="M1028.3 36.6V40.6Q1028.3 42.9 1030.4 42.9H1032.4M1031.2 41.4L1032.7 42.9L1031.2 44.4"/>
<path d="M1036.1 41.7V37.7Q1036.1 35.4 1034 35.4H1032.2M1033.4 33.9L1031.9 35.4L1033.4 36.9"/>
</g>
<g stroke="#d0d0d0" stroke-width="1.4">
<rect x="1053.6" y="34.5" width="10.9" height="9.8" rx="1.4"/><path d="M1059.05 34.5V44.3"/>
</g>
<g fill="#dcdcdc" stroke="none"><circle cx="1080.4" cy="39.5" r="1.0"/><circle cx="1084.75" cy="39.5" r="1.0"/><circle cx="1089.1" cy="39.5" r="1.0"/></g>
<!-- panel actions -->
<g stroke="#d0d0d0" stroke-width="1.15">
<path d="M946 542.6L949.6 546.1L953.2 542.6"/>
<path d="M973.8 538.9H985.4M973.8 541.7H985.4M973.8 544.6H980.4M973.8 547.4H980.4" stroke-linecap="butt"/>
<path d="M981.8 544.4L985.2 547.8M985.2 544.4L981.8 547.8" stroke-width="0.9"/>
<rect x="1001.4" y="543.2" width="9.4" height="5.2" rx="0.8"/>
<path d="M1003.2 543.2V540.6Q1003.2 538.2 1005.9 538.2Q1008.7 538.2 1008.9 540.4"/>
<path d="M1054.2 546.1L1058.7 541.3L1063.2 546.1"/>
<path d="M1081.3 540.2L1088.4 547.1M1088.4 540.2L1081.3 547.1"/>
</g>
<g stroke="#6a6a6a" stroke-width="1">
<path d="M1030.2 541.2V548.2H1037.8V541L1035.2 538.4H1031.6V540.6"/>
<path d="M1035 538.6V541.2H1037.6M1027.4 540.8Q1028.2 538.6 1030.6 539.2"/>
</g>
<!-- status bar icons -->
<g stroke="#fff" stroke-width="1.2">
<circle cx="15.5" cy="886.1" r="1.4"/><circle cx="15.5" cy="893.7" r="1.4"/><circle cx="21.2" cy="888.2" r="1.4"/>
<path d="M15.5 887.5V892.3M21.2 889.6Q21.2 891.8 16.6 892.8"/>
<path d="M75.5 889.2A4 4 0 0 1 83.3 888.8M83.4 890.8A4 4 0 0 1 75.6 891.2"/>
<circle cx="104.2" cy="890.3" r="4.6"/><path d="M102.3 888.4L106.1 892.2M106.1 888.4L102.3 892.2"/>
<path d="M126.4 885.8L131.2 894H121.6Z"/><path d="M126.4 888.8V891.4M126.4 892.5V892.7" stroke-width="0.9"/>
<path d="M941.2 887.6L947.1 893.3M947.1 887.6L941.2 893.3"/>
<circle cx="1055.6" cy="890.1" r="4.7"/>
<path d="M1053 891.4Q1055.6 894.2 1058.2 891.4"/>
<path d="M1076.3 892.8Q1077.8 891.6 1077.8 888.8Q1077.8 885.8 1080.2 885.8Q1082.6 885.8 1082.6 888.8Q1082.6 891.6 1084.1 892.8ZM1079.2 894.5Q1080.2 895.3 1081.2 894.5"/>
</g>
<g fill="#fff" stroke="none"><path d="M81.4 888.7H85.4L83.4 891.3ZM73.5 891.3H77.5L75.5 888.7Z"/><circle cx="1054" cy="888.7" r="0.7"/><circle cx="1057.2" cy="888.7" r="0.7"/></g>
</svg>

<span class="t" style="left:35.1px;top:3.9px;height:18.4px;line-height:18.4px;font-size:11.5px;color:#ccc;letter-spacing:-0.220px;transform:scaleX(0.9392);"><u>F</u>ile</span>
<span class="t" style="left:64.2px;top:3.9px;height:18.4px;line-height:18.4px;font-size:11.5px;color:#ccc;letter-spacing:-0.220px;transform:scaleX(0.9443);"><u>E</u>dit</span>
<span class="t" style="left:95.3px;top:3.9px;height:18.4px;line-height:18.4px;font-size:11.5px;color:#ccc;letter-spacing:-0.220px;transform:scaleX(0.9418);"><u>S</u>election</span>
<span class="t" style="left:151.2px;top:3.9px;height:18.4px;line-height:18.4px;font-size:11.5px;color:#ccc;letter-spacing:-0.220px;transform:scaleX(0.9471);"><u>V</u>iew</span>
<span class="t" style="left:186.5px;top:3.9px;height:18.4px;line-height:18.4px;font-size:11.5px;color:#ccc;"><u>G</u>o</span>
<span class="t" style="left:214.0px;top:3.9px;height:18.4px;line-height:18.4px;font-size:11.5px;color:#ccc;letter-spacing:-0.220px;transform:scaleX(0.9568);"><u>D</u>ebug</span>
<span class="t" style="left:258.6px;top:3.9px;height:18.4px;line-height:18.4px;font-size:11.5px;color:#ccc;letter-spacing:-0.220px;transform:scaleX(0.9731);"><u>T</u>erminal</span>
<span class="t" style="left:312.5px;top:3.9px;height:18.4px;line-height:18.4px;font-size:11.5px;color:#ccc;letter-spacing:-0.220px;transform:scaleX(0.9300);"><u>H</u>elp</span>
<span class="t" style="left:387.4px;top:5.8px;height:16.3px;line-height:16.3px;font-size:10.2px;color:#ccc;letter-spacing:-0.199px;">MiniUltraLoRaWANChirp.ino - MiniUltraLoRaWANChirp - Visual Studio Code</span>
<span class="t" style="left:56.3px;top:32.7px;height:14.4px;line-height:14.4px;font-size:9.0px;color:#bbb;letter-spacing:-0.220px;transform:scaleX(0.8549);">EXPLORER</span>
<span class="t" style="left:55.8px;top:55.8px;height:14.4px;line-height:14.4px;font-size:9.0px;color:#ccc;letter-spacing:-0.220px;transform:scaleX(0.9795);font-weight:bold;">OPEN EDITORS</span>
<span class="t" style="left:86.0px;top:72.7px;height:17.1px;line-height:17.1px;font-size:10.66px;color:#f48771;letter-spacing:-0.065px;">MiniUltraLoRaWANChirp.ino</span>
<span class="t" style="left:242.3px;top:73.8px;height:16.0px;line-height:16.0px;font-size:10.0px;color:#f48771;letter-spacing:-0.088px;">3, M</span>
<span class="t" style="left:86.0px;top:90.7px;height:17.1px;line-height:17.1px;font-size:10.66px;color:#f48771;letter-spacing:-0.220px;transform:scaleX(0.9741);">secrets.h</span>
<span class="t" style="left:256.9px;top:91.9px;height:16.0px;line-height:16.0px;font-size:10.0px;color:#f48771;">1</span>
<span class="t" style="left:55.8px;top:109.8px;height:14.4px;line-height:14.4px;font-size:9.0px;color:#ccc;letter-spacing:-0.058px;font-weight:bold;">MINIULTRALORAWANCHIRP</span>
<span class="t" style="left:67.6px;top:126.9px;height:17.1px;line-height:17.1px;font-size:10.66px;color:#ccc;letter-spacing:-0.220px;transform:scaleX(0.9798);-webkit-text-stroke:0.22px;">.vscode</span>
<span class="t" style="left:74.1px;top:144.8px;height:17.1px;line-height:17.1px;font-size:10.66px;color:#ccc;letter-spacing:-0.014px;-webkit-text-stroke:0.22px;">arduino.json</span>
<span class="t" style="left:74.1px;top:163.0px;height:17.1px;line-height:17.1px;font-size:10.66px;color:#ccc;letter-spacing:-0.160px;-webkit-text-stroke:0.22px;">c_cpp_properties.json</span>
<span class="t" style="left:67.6px;top:181.0px;height:17.1px;line-height:17.1px;font-size:10.66px;color:#e2c08d;letter-spacing:-0.152px;-webkit-text-stroke:0.22px;">Power Profile</span>
<span class="t" style="left:67.6px;top:199.0px;height:17.1px;line-height:17.1px;font-size:10.66px;color:#f48771;letter-spacing:-0.065px;">MiniUltraLoRaWANChirp.ino</span>
<span class="t" style="left:242.3px;top:200.2px;height:16.0px;line-height:16.0px;font-size:10.0px;color:#f48771;letter-spacing:-0.088px;">3, M</span>
<span class="t" style="left:67.6px;top:217.0px;height:17.1px;line-height:17.1px;font-size:10.66px;color:#f48771;letter-spacing:-0.220px;transform:scaleX(0.9837);">secrets.h</span>
<span class="t" style="left:256.9px;top:218.3px;height:16.0px;line-height:16.0px;font-size:10.0px;color:#f48771;">1</span>
<span class="t" style="left:56.2px;top:847.3px;height:14.4px;line-height:14.4px;font-size:9.0px;color:#ccc;letter-spacing:-0.220px;transform:scaleX(0.9822);font-weight:bold;">OUTLINE</span>
<span class="t" style="left:56.2px;top:865.1px;height:14.4px;line-height:14.4px;font-size:9.0px;color:#ccc;letter-spacing:-0.220px;transform:scaleX(0.9932);font-weight:bold;">ARDUINO EXAMPLES</span>
<span class="t" style="left:300.6px;top:31.7px;height:17.1px;line-height:17.1px;font-size:10.66px;color:#fff;letter-spacing:-0.057px;">MiniUltraLoRaWANChirp.ino</span>
<span class="t" style="left:484.3px;top:31.7px;height:17.1px;line-height:17.1px;font-size:10.66px;color:#8f8f8f;letter-spacing:-0.220px;transform:scaleX(0.9813);">secrets.h</span>
<span class="t" style="left:305.8px;top:54.8px;height:17.1px;line-height:17.1px;font-size:10.66px;color:#a9a9a9;letter-spacing:-0.069px;">MiniUltraLoRaWANChirp.ino</span>
<span class="t" style="left:470.2px;top:54.8px;height:17.1px;line-height:17.1px;font-size:10.66px;color:#a9a9a9;letter-spacing:-0.096px;">setup()</span>
<span class="t" style="left:291.0px;top:537.1px;height:14.4px;line-height:14.4px;font-size:9.0px;color:#969696;letter-spacing:-0.220px;transform:scaleX(0.8912);">PROBLEMS</span>
<span class="t" style="left:346.8px;top:537.1px;height:14.4px;line-height:14.4px;font-size:9.0px;color:#fff;">4</span>
<span class="t" style="left:372.8px;top:537.1px;height:14.4px;line-height:14.4px;font-size:9.0px;color:#e7e7e7;letter-spacing:-0.220px;transform:scaleX(0.9304);">OUTPUT</span>
<span class="t" style="left:423.0px;top:537.1px;height:14.4px;line-height:14.4px;font-size:9.0px;color:#969696;letter-spacing:-0.220px;transform:scaleX(0.9211);">DEBUG CONSOLE</span>
<span class="t" style="left:509.8px;top:537.1px;height:14.4px;line-height:14.4px;font-size:9.0px;color:#969696;letter-spacing:-0.220px;transform:scaleX(0.9551);">TERMINAL</span>
<span class="t" style="left:828.0px;top:536.4px;height:17.1px;line-height:17.1px;font-size:10.66px;color:#f0f0f0;letter-spacing:0.154px;">Serial Monitor</span>
<span class="t" style="left:27.3px;top:882.8px;height:16.6px;line-height:16.6px;font-size:10.4px;color:#fff;letter-spacing:-0.220px;transform:scaleX(0.9480);-webkit-text-stroke:0.3px;">master*</span>
<span class="t" style="left:112.3px;top:882.8px;height:16.6px;line-height:16.6px;font-size:10.4px;color:#fff;-webkit-text-stroke:0.3px;">4</span>
<span class="t" style="left:134.5px;top:882.8px;height:16.6px;line-height:16.6px;font-size:10.4px;color:#fff;-webkit-text-stroke:0.3px;">0</span>
<span class="t" style="left:268.8px;top:882.8px;height:16.6px;line-height:16.6px;font-size:10.4px;color:#fff;letter-spacing:-0.220px;transform:scaleX(0.9396);-webkit-text-stroke:0.3px;">Ln 47, Col 37</span>
<span class="t" style="left:337.6px;top:882.8px;height:16.6px;line-height:16.6px;font-size:10.4px;color:#fff;letter-spacing:-0.220px;transform:scaleX(0.9020);-webkit-text-stroke:0.3px;">Spaces: 2</span>
<span class="t" style="left:390.9px;top:882.8px;height:16.6px;line-height:16.6px;font-size:10.4px;color:#fff;letter-spacing:-0.220px;transform:scaleX(0.9034);-webkit-text-stroke:0.3px;">UTF-8</span>
<span class="t" style="left:429.8px;top:882.8px;height:16.6px;line-height:16.6px;font-size:10.4px;color:#fff;letter-spacing:-0.220px;transform:scaleX(0.8270);-webkit-text-stroke:0.3px;">CRLF</span>
<span class="t" style="left:464.5px;top:882.8px;height:16.6px;line-height:16.6px;font-size:10.4px;color:#fff;letter-spacing:-0.214px;-webkit-text-stroke:0.3px;">C++</span>
<span class="t" style="left:497.0px;top:882.8px;height:16.6px;line-height:16.6px;font-size:10.4px;color:#fff;letter-spacing:-0.220px;transform:scaleX(0.9152);-webkit-text-stroke:0.3px;">AVRISP mkII</span>
<span class="t" style="left:563.1px;top:882.8px;height:16.6px;line-height:16.6px;font-size:10.4px;color:#fff;letter-spacing:-0.220px;transform:scaleX(0.9722);-webkit-text-stroke:0.3px;">MiniUltraLoRaWANChirp.ino</span>
<span class="t" style="left:699.3px;top:882.8px;height:16.6px;line-height:16.6px;font-size:10.4px;color:#fff;letter-spacing:-0.181px;-webkit-text-stroke:0.3px;">No line ending</span>
<span class="t" style="left:776.3px;top:882.8px;height:16.6px;line-height:16.6px;font-size:10.4px;color:#fff;letter-spacing:-0.174px;-webkit-text-stroke:0.3px;">Arduino Pro or Pro Mini</span>
<span class="t" style="left:894.2px;top:882.8px;height:16.6px;line-height:16.6px;font-size:10.4px;color:#fff;letter-spacing:-0.220px;transform:scaleX(0.9388);-webkit-text-stroke:0.3px;">115200</span>
<span class="t" style="left:963.1px;top:882.8px;height:16.6px;line-height:16.6px;font-size:10.4px;color:#fff;letter-spacing:-0.220px;transform:scaleX(0.9390);-webkit-text-stroke:0.3px;">COM12</span>
<span class="t" style="left:1009.0px;top:882.8px;height:16.6px;line-height:16.6px;font-size:10.4px;color:#fff;letter-spacing:-0.220px;transform:scaleX(0.9554);-webkit-text-stroke:0.3px;">Win32</span>
<span class="t" style="left:1088.1px;top:882.8px;height:16.6px;line-height:16.6px;font-size:10.4px;color:#fff;-webkit-text-stroke:0.3px;">1</span>
<span class="t" style="left:22.1px;top:131.6px;height:11.8px;line-height:11.8px;font-size:7.4px;color:#fff;font-weight:bold;">18</span>
<span class="t" style="left:60.4px;top:144.7px;height:16.8px;line-height:16.8px;font-size:10.5px;color:#cbcb41;font-weight:bold;letter-spacing:1.2px;margin-left:-0.6px;">{}</span>
<span class="t" style="left:60.4px;top:162.9px;height:16.8px;line-height:16.8px;font-size:10.5px;color:#cbcb41;font-weight:bold;letter-spacing:1.2px;margin-left:-0.6px;">{}</span>
</body>
</html>
